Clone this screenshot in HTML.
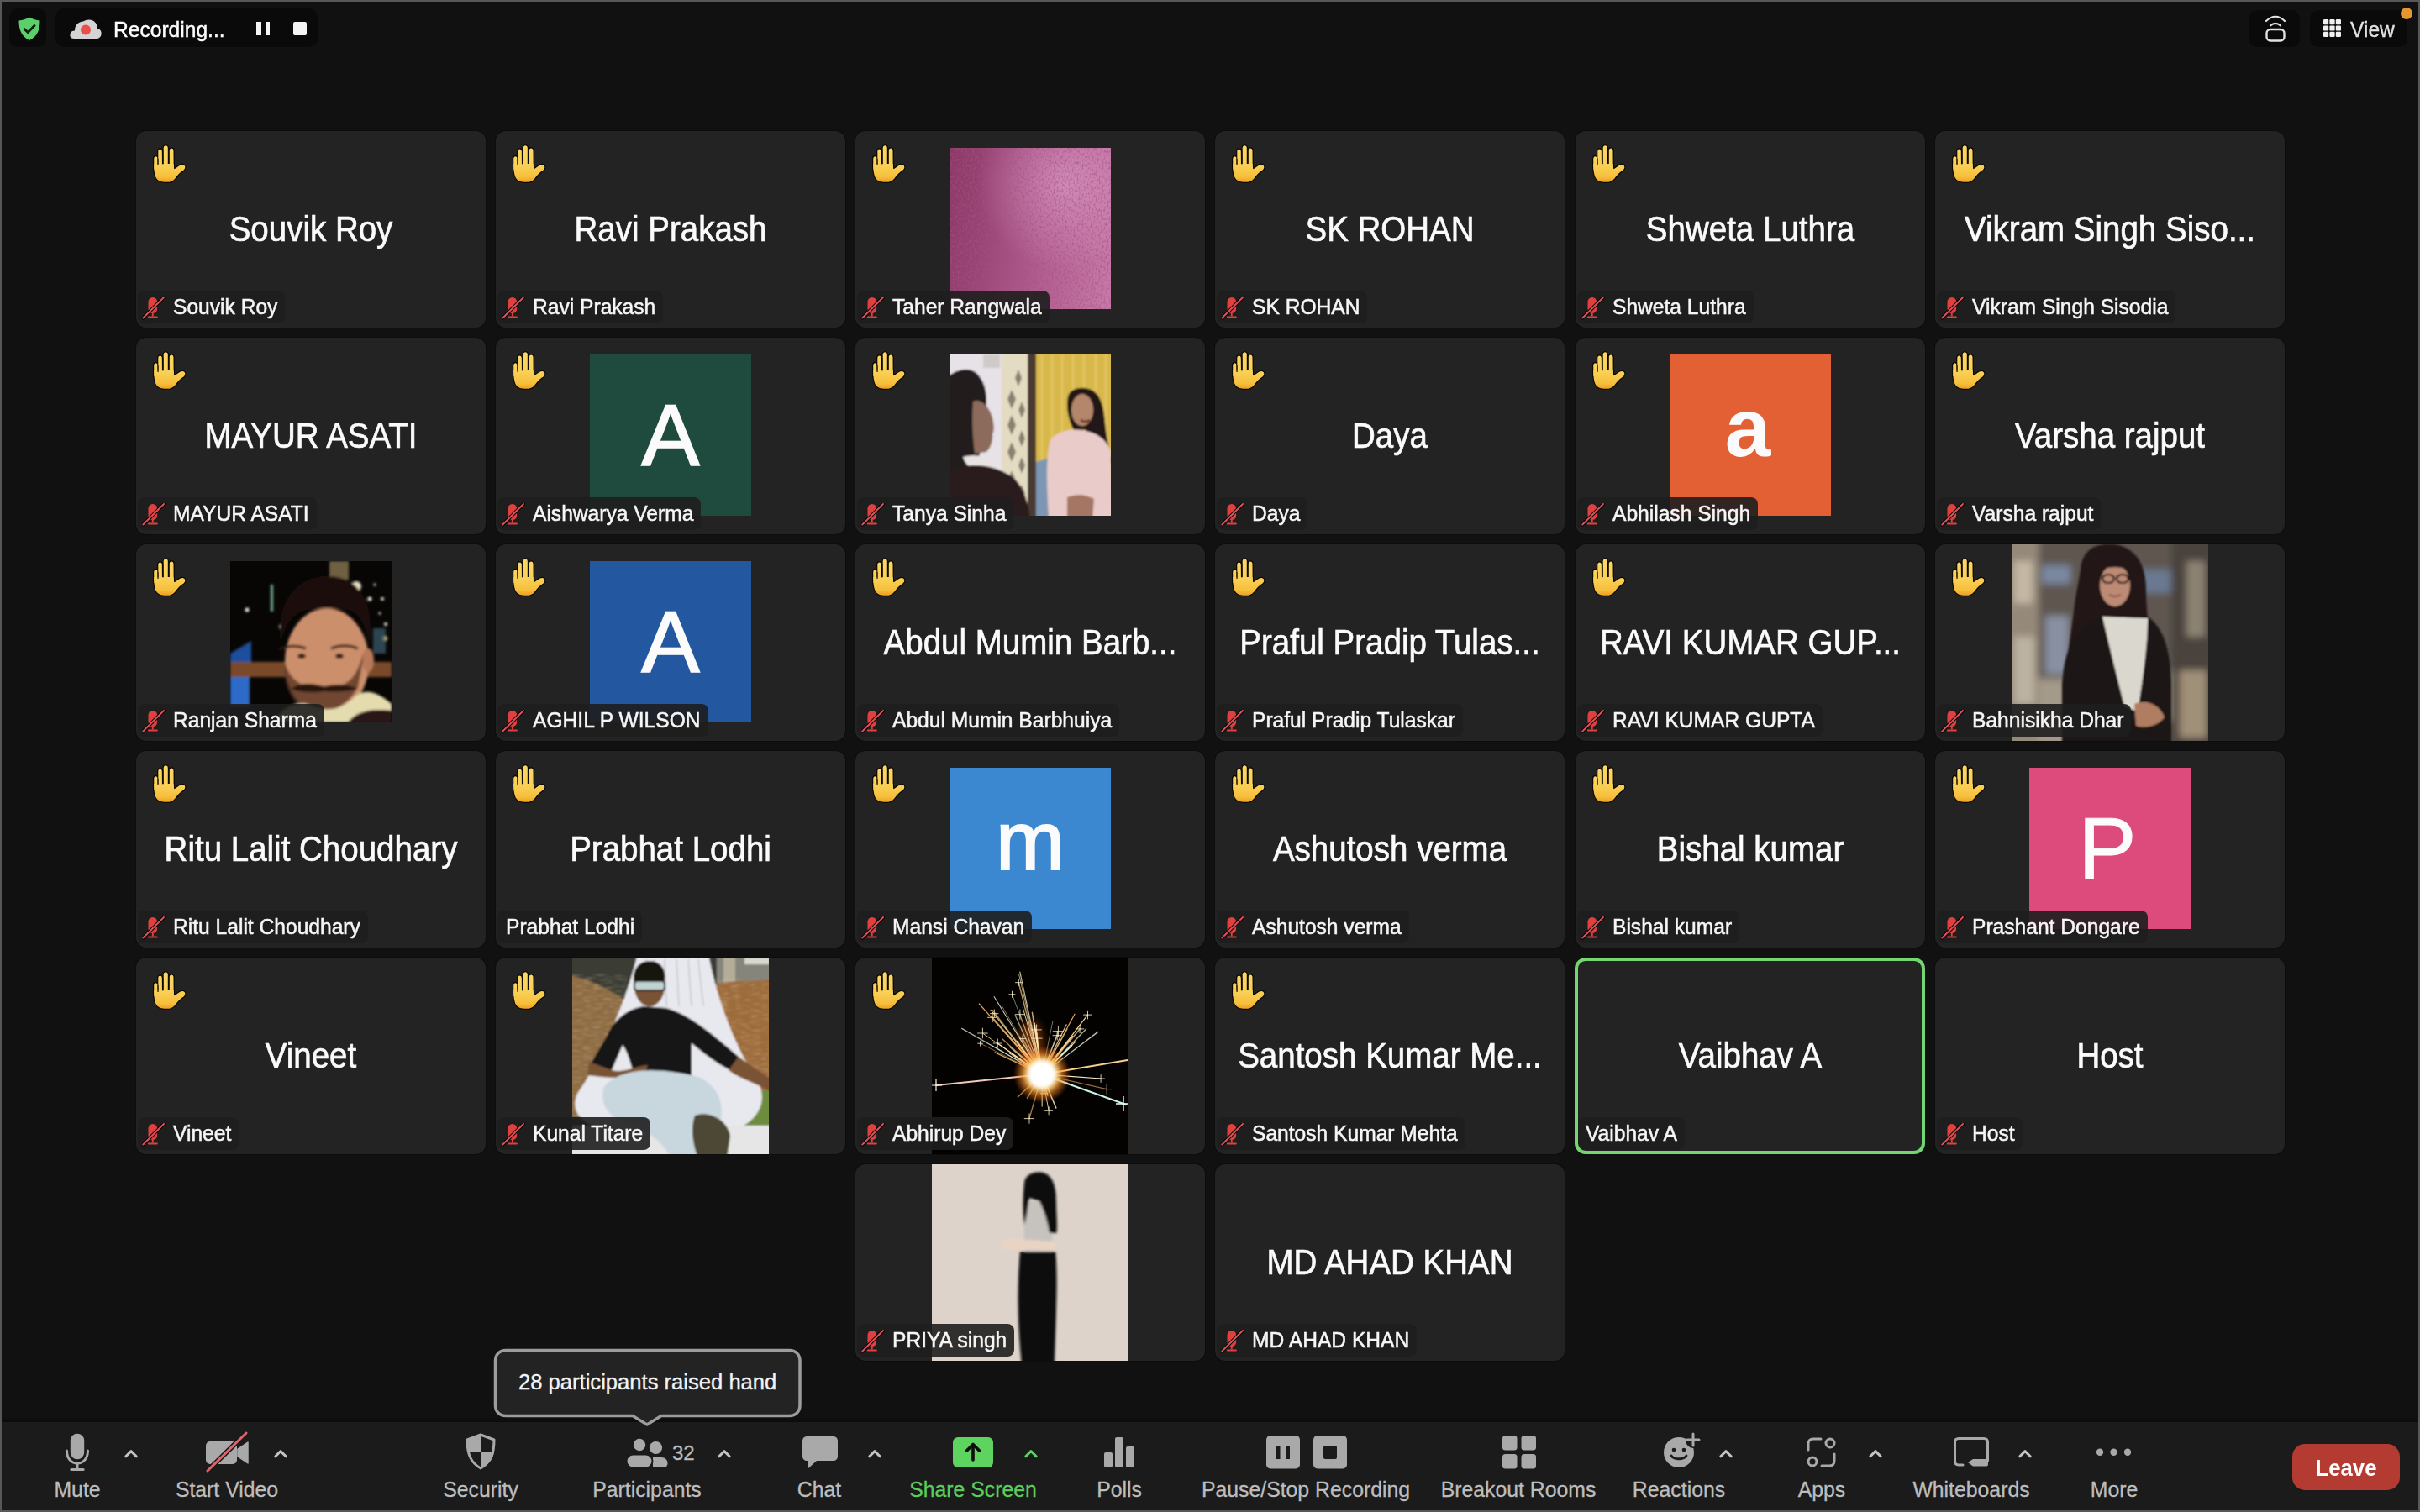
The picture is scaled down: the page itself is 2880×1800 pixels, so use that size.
<!DOCTYPE html><html><head><meta charset="utf-8"><style>
*{margin:0;padding:0;box-sizing:border-box}
html,body{width:2880px;height:1800px;overflow:hidden;background:#111111;font-family:"Liberation Sans",sans-serif}
#win{position:absolute;left:0;top:0;width:2880px;height:1800px;border:2px solid #585858;background:#111111}
.tile{position:absolute;width:416px;height:234px;background:#232323;border-radius:12px;overflow:hidden;color:#fff;box-shadow:0 0 0 1px #0d0d0d}
.tile.active{box-shadow:0 0 0 0 transparent}
.activebd{position:absolute;border:4px solid #72d672;border-radius:13px}
.big{position:absolute;left:0;top:94px;width:416px;text-align:center;font-size:38.5px;line-height:46px;color:#fbfbfb;white-space:nowrap;transform:scaleY(1.1);-webkit-text-stroke:0.6px #fbfbfb}
.hand{position:absolute;left:16px;top:12px}
.lbl{position:absolute;left:2px;top:190px;height:38.5px;padding-right:9px;background:rgba(30,30,30,0.9);border-radius:8px;font-size:24.6px;line-height:38.5px;color:#f6f6f6;white-space:nowrap;-webkit-text-stroke:0.5px #f6f6f6}
.lt{display:inline-block;transform:translateY(0px) scaleY(1.065)}
.mm{position:absolute}
.av{position:absolute;left:112px;top:20px;width:192px;height:192px;overflow:hidden}
.avl{position:absolute;width:192px;height:192px;text-align:center;line-height:192px;font-family:"Liberation Sans",sans-serif}
.ph{position:absolute;top:0;height:234px;overflow:hidden}
.tb{position:absolute;left:2px;top:1693px;width:2876px;height:105px;background:#1b1b1b;box-shadow:0 -4px 4px rgba(0,0,0,0.25)}
.tl{position:absolute;top:1759px;font-size:24.8px;line-height:30px;color:#bdbdbd;white-space:nowrap;transform:translateX(-50%) scaleY(1.06);-webkit-text-stroke:0.3px currentColor}
.ic{position:absolute}
</style></head><body><div id="win"></div>
<div style="position:absolute;left:11px;top:10px;width:44px;height:46px;background:#0a0a0a;border-radius:10px"></div>
<svg class="ic" style="left:19px;top:18px" width="32" height="32" viewBox="0 0 32 32"><path d="M16 2.5 C20 5 24 6 28.5 6.5 C28.5 17 26 25 16 30 C6 25 3.5 17 3.5 6.5 C8 6 12 5 16 2.5Z" fill="#5bd06a"/><path d="M10 16.5 L14.2 20.5 L22 12.5" stroke="#10200f" stroke-width="3" fill="none" stroke-linecap="round" stroke-linejoin="round"/></svg>
<div style="position:absolute;left:66px;top:10px;width:312px;height:46px;background:#0a0a0a;border-radius:10px"></div>
<svg class="ic" style="left:80px;top:18px" width="44" height="32" viewBox="0 0 44 32"><path d="M8 28 C4 28 3 25 3.5 22.5 C4 20 6 18.5 9 18.5 C9 12 13 8 19 7.5 C24 4 31 5 34 9.5 C35.5 12 36 14 36 16 C39.5 16.5 41 19.5 40.5 23 C40 26.5 37.5 28 35 28 Z" fill="#d4d4d4"/><circle cx="22" cy="17.5" r="6" fill="#e8504a"/></svg>
<div style="position:absolute;left:135px;top:19px;transform:scaleY(1.06);font-size:24.6px;line-height:34px;color:#ffffff;white-space:nowrap;-webkit-text-stroke:0.4px #fff">Recording...</div>
<div style="position:absolute;left:305px;top:26px;width:5.5px;height:16px;background:#f4f4f4"></div><div style="position:absolute;left:315.5px;top:26px;width:5.5px;height:16px;background:#f4f4f4"></div>
<div style="position:absolute;left:349px;top:26px;width:16px;height:16px;background:#f4f4f4;border-radius:2px"></div>
<div style="position:absolute;left:2676px;top:12px;width:61px;height:44px;background:#0a0a0a;border-radius:10px"></div>
<svg class="ic" style="left:2692px;top:16px" width="32" height="36" viewBox="0 0 32 36"><path d="M5 9 C12 2 20 2 27 9" stroke="#e2e2e2" stroke-width="2.2" fill="none" stroke-linecap="round"/><path d="M10 14.5 C14 11 18 11 22 14.5" stroke="#e2e2e2" stroke-width="2.2" fill="none" stroke-linecap="round"/><rect x="5.5" y="19" width="21" height="13.5" rx="4.5" stroke="#e2e2e2" stroke-width="2.4" fill="none"/></svg>
<div style="position:absolute;left:2749px;top:12px;width:116px;height:44px;background:#0a0a0a;border-radius:10px"></div>
<svg class="ic" style="left:2764px;top:22px" width="24" height="24" viewBox="0 0 24 24"><rect x="1.0" y="1.0" width="6.2" height="6.2" rx="1.2" fill="#f0f0f0"/><rect x="8.4" y="1.0" width="6.2" height="6.2" rx="1.2" fill="#f0f0f0"/><rect x="15.8" y="1.0" width="6.2" height="6.2" rx="1.2" fill="#f0f0f0"/><rect x="1.0" y="8.4" width="6.2" height="6.2" rx="1.2" fill="#f0f0f0"/><rect x="8.4" y="8.4" width="6.2" height="6.2" rx="1.2" fill="#f0f0f0"/><rect x="15.8" y="8.4" width="6.2" height="6.2" rx="1.2" fill="#f0f0f0"/><rect x="1.0" y="15.8" width="6.2" height="6.2" rx="1.2" fill="#f0f0f0"/><rect x="8.4" y="15.8" width="6.2" height="6.2" rx="1.2" fill="#f0f0f0"/><rect x="15.8" y="15.8" width="6.2" height="6.2" rx="1.2" fill="#f0f0f0"/></svg>
<div style="position:absolute;left:2797px;top:19px;transform:scaleY(1.04);font-size:24.6px;line-height:34px;color:#e2e2e2;white-space:nowrap;-webkit-text-stroke:0.3px #e2e2e2">View</div>
<div style="position:absolute;left:2857px;top:9px;width:14px;height:14px;background:#e6962e;border-radius:50%"></div>
<div class="tile" style="left:162px;top:156px"><div class="big">Souvik Roy</div><svg class="hand" width="50" height="54" viewBox="0 0 50 54"><defs><linearGradient id="hg" gradientUnits="userSpaceOnUse" x1="0" y1="5" x2="0" y2="49"><stop offset="0" stop-color="#fbd866"/><stop offset="0.55" stop-color="#f9d055"/><stop offset="0.85" stop-color="#f6bf3c"/><stop offset="1" stop-color="#ee9f22"/></linearGradient></defs><g stroke="#0d0803" stroke-width="2.4" stroke-linejoin="round" fill="#0d0803"><path d="M5.2 21.5 C5.2 17.2 9.6 17.2 9.6 21.5 L9.8 34 L5.4 34Z"/><path d="M10.3 12.2 C10.3 8.6 14.8 8.6 14.8 12.2 L15 31 L10.4 31Z"/><path d="M16.7 8.2 C16.7 4.4 21.8 4.4 21.8 8.2 L21.8 30 L16.7 30Z"/><path d="M23.7 11.2 C23.7 7.6 28.5 7.6 28.5 11.2 L28.7 33 L23.7 33Z"/><path d="M5.3 30 C5.5 38 6.6 42.5 9.1 45.4 C12 48.4 16.5 48.8 20.5 48.8 C25 48.8 28 47.4 30.4 44.4 C32.4 41.9 34.2 39.5 36.5 37.5 C38.8 35.5 42.5 34.2 42.3 30.8 C42 27.8 38.8 27.4 36.3 28.8 C33.6 30.3 31.5 32.6 29.2 33.2 L28.6 27 L5.3 27Z"/></g><g fill="url(#hg)"><path d="M5.2 21.5 C5.2 17.2 9.6 17.2 9.6 21.5 L9.8 34 L5.4 34Z"/><path d="M10.3 12.2 C10.3 8.6 14.8 8.6 14.8 12.2 L15 31 L10.4 31Z"/><path d="M16.7 8.2 C16.7 4.4 21.8 4.4 21.8 8.2 L21.8 30 L16.7 30Z"/><path d="M23.7 11.2 C23.7 7.6 28.5 7.6 28.5 11.2 L28.7 33 L23.7 33Z"/><path d="M5.3 30 C5.5 38 6.6 42.5 9.1 45.4 C12 48.4 16.5 48.8 20.5 48.8 C25 48.8 28 47.4 30.4 44.4 C32.4 41.9 34.2 39.5 36.5 37.5 C38.8 35.5 42.5 34.2 42.3 30.8 C42 27.8 38.8 27.4 36.3 28.8 C33.6 30.3 31.5 32.6 29.2 33.2 L28.6 27 L5.3 27Z"/></g><g stroke="#120a02" stroke-width="1.2" stroke-linecap="round" fill="none"><path d="M9.95 21 L10.05 28.5"/><path d="M15.75 12 L15.85 27"/><path d="M22.75 9.5 L22.75 26.5"/></g></svg><div class="lbl" style="padding-left:42px"><svg class="mm" style="left:5px;top:7px" width="28" height="28" viewBox="0 0 28 28"><rect x="7.5" y="1" width="10.6" height="19" rx="5.3" fill="#e0413f"/><path d="M12.8 20 L12.8 23.5" stroke="#e0413f" stroke-width="1.8"/><path d="M8 24.5 L17.8 24.5" stroke="#e0413f" stroke-width="2.2" stroke-linecap="round"/><path d="M1.3 25.5 L26 1" stroke="#0b0202" stroke-width="4" stroke-linecap="round"/><path d="M1.3 25.5 L26 1" stroke="#e2505e" stroke-width="1.9" stroke-linecap="round"/></svg><span class="lt">Souvik Roy</span></div></div>
<div class="tile" style="left:590px;top:156px"><div class="big">Ravi Prakash</div><svg class="hand" width="50" height="54" viewBox="0 0 50 54"><defs><linearGradient id="hg" gradientUnits="userSpaceOnUse" x1="0" y1="5" x2="0" y2="49"><stop offset="0" stop-color="#fbd866"/><stop offset="0.55" stop-color="#f9d055"/><stop offset="0.85" stop-color="#f6bf3c"/><stop offset="1" stop-color="#ee9f22"/></linearGradient></defs><g stroke="#0d0803" stroke-width="2.4" stroke-linejoin="round" fill="#0d0803"><path d="M5.2 21.5 C5.2 17.2 9.6 17.2 9.6 21.5 L9.8 34 L5.4 34Z"/><path d="M10.3 12.2 C10.3 8.6 14.8 8.6 14.8 12.2 L15 31 L10.4 31Z"/><path d="M16.7 8.2 C16.7 4.4 21.8 4.4 21.8 8.2 L21.8 30 L16.7 30Z"/><path d="M23.7 11.2 C23.7 7.6 28.5 7.6 28.5 11.2 L28.7 33 L23.7 33Z"/><path d="M5.3 30 C5.5 38 6.6 42.5 9.1 45.4 C12 48.4 16.5 48.8 20.5 48.8 C25 48.8 28 47.4 30.4 44.4 C32.4 41.9 34.2 39.5 36.5 37.5 C38.8 35.5 42.5 34.2 42.3 30.8 C42 27.8 38.8 27.4 36.3 28.8 C33.6 30.3 31.5 32.6 29.2 33.2 L28.6 27 L5.3 27Z"/></g><g fill="url(#hg)"><path d="M5.2 21.5 C5.2 17.2 9.6 17.2 9.6 21.5 L9.8 34 L5.4 34Z"/><path d="M10.3 12.2 C10.3 8.6 14.8 8.6 14.8 12.2 L15 31 L10.4 31Z"/><path d="M16.7 8.2 C16.7 4.4 21.8 4.4 21.8 8.2 L21.8 30 L16.7 30Z"/><path d="M23.7 11.2 C23.7 7.6 28.5 7.6 28.5 11.2 L28.7 33 L23.7 33Z"/><path d="M5.3 30 C5.5 38 6.6 42.5 9.1 45.4 C12 48.4 16.5 48.8 20.5 48.8 C25 48.8 28 47.4 30.4 44.4 C32.4 41.9 34.2 39.5 36.5 37.5 C38.8 35.5 42.5 34.2 42.3 30.8 C42 27.8 38.8 27.4 36.3 28.8 C33.6 30.3 31.5 32.6 29.2 33.2 L28.6 27 L5.3 27Z"/></g><g stroke="#120a02" stroke-width="1.2" stroke-linecap="round" fill="none"><path d="M9.95 21 L10.05 28.5"/><path d="M15.75 12 L15.85 27"/><path d="M22.75 9.5 L22.75 26.5"/></g></svg><div class="lbl" style="padding-left:42px"><svg class="mm" style="left:5px;top:7px" width="28" height="28" viewBox="0 0 28 28"><rect x="7.5" y="1" width="10.6" height="19" rx="5.3" fill="#e0413f"/><path d="M12.8 20 L12.8 23.5" stroke="#e0413f" stroke-width="1.8"/><path d="M8 24.5 L17.8 24.5" stroke="#e0413f" stroke-width="2.2" stroke-linecap="round"/><path d="M1.3 25.5 L26 1" stroke="#0b0202" stroke-width="4" stroke-linecap="round"/><path d="M1.3 25.5 L26 1" stroke="#e2505e" stroke-width="1.9" stroke-linecap="round"/></svg><span class="lt">Ravi Prakash</span></div></div>
<div class="tile" style="left:1018px;top:156px"><div class="av" style="background:linear-gradient(100deg,#8a3864 0%,#9c4878 30%,#b25e90 60%,#c87ca8 100%)"><svg width="192" height="192" viewBox="0 0 192 192" style="position:absolute;left:0;top:0"><defs><radialGradient id="tg" cx="0.72" cy="0.22" r="0.55"><stop offset="0" stop-color="#dc9cc6" stop-opacity="0.7"/><stop offset="1" stop-color="#dc9cc6" stop-opacity="0"/></radialGradient><filter id="tn" x="0" y="0" width="100%" height="100%"><feTurbulence type="fractalNoise" baseFrequency="0.5 0.3" numOctaves="2" seed="3" result="n"/><feColorMatrix in="n" type="matrix" values="0 0 0 0 0.38  0 0 0 0 0.08  0 0 0 0 0.24  0 0 0 1.8 -0.8"/></filter></defs><rect width="192" height="192" fill="url(#tg)"/><rect width="192" height="192" filter="url(#tn)"/></svg></div><svg class="hand" width="50" height="54" viewBox="0 0 50 54"><defs><linearGradient id="hg" gradientUnits="userSpaceOnUse" x1="0" y1="5" x2="0" y2="49"><stop offset="0" stop-color="#fbd866"/><stop offset="0.55" stop-color="#f9d055"/><stop offset="0.85" stop-color="#f6bf3c"/><stop offset="1" stop-color="#ee9f22"/></linearGradient></defs><g stroke="#0d0803" stroke-width="2.4" stroke-linejoin="round" fill="#0d0803"><path d="M5.2 21.5 C5.2 17.2 9.6 17.2 9.6 21.5 L9.8 34 L5.4 34Z"/><path d="M10.3 12.2 C10.3 8.6 14.8 8.6 14.8 12.2 L15 31 L10.4 31Z"/><path d="M16.7 8.2 C16.7 4.4 21.8 4.4 21.8 8.2 L21.8 30 L16.7 30Z"/><path d="M23.7 11.2 C23.7 7.6 28.5 7.6 28.5 11.2 L28.7 33 L23.7 33Z"/><path d="M5.3 30 C5.5 38 6.6 42.5 9.1 45.4 C12 48.4 16.5 48.8 20.5 48.8 C25 48.8 28 47.4 30.4 44.4 C32.4 41.9 34.2 39.5 36.5 37.5 C38.8 35.5 42.5 34.2 42.3 30.8 C42 27.8 38.8 27.4 36.3 28.8 C33.6 30.3 31.5 32.6 29.2 33.2 L28.6 27 L5.3 27Z"/></g><g fill="url(#hg)"><path d="M5.2 21.5 C5.2 17.2 9.6 17.2 9.6 21.5 L9.8 34 L5.4 34Z"/><path d="M10.3 12.2 C10.3 8.6 14.8 8.6 14.8 12.2 L15 31 L10.4 31Z"/><path d="M16.7 8.2 C16.7 4.4 21.8 4.4 21.8 8.2 L21.8 30 L16.7 30Z"/><path d="M23.7 11.2 C23.7 7.6 28.5 7.6 28.5 11.2 L28.7 33 L23.7 33Z"/><path d="M5.3 30 C5.5 38 6.6 42.5 9.1 45.4 C12 48.4 16.5 48.8 20.5 48.8 C25 48.8 28 47.4 30.4 44.4 C32.4 41.9 34.2 39.5 36.5 37.5 C38.8 35.5 42.5 34.2 42.3 30.8 C42 27.8 38.8 27.4 36.3 28.8 C33.6 30.3 31.5 32.6 29.2 33.2 L28.6 27 L5.3 27Z"/></g><g stroke="#120a02" stroke-width="1.2" stroke-linecap="round" fill="none"><path d="M9.95 21 L10.05 28.5"/><path d="M15.75 12 L15.85 27"/><path d="M22.75 9.5 L22.75 26.5"/></g></svg><div class="lbl" style="padding-left:42px"><svg class="mm" style="left:5px;top:7px" width="28" height="28" viewBox="0 0 28 28"><rect x="7.5" y="1" width="10.6" height="19" rx="5.3" fill="#e0413f"/><path d="M12.8 20 L12.8 23.5" stroke="#e0413f" stroke-width="1.8"/><path d="M8 24.5 L17.8 24.5" stroke="#e0413f" stroke-width="2.2" stroke-linecap="round"/><path d="M1.3 25.5 L26 1" stroke="#0b0202" stroke-width="4" stroke-linecap="round"/><path d="M1.3 25.5 L26 1" stroke="#e2505e" stroke-width="1.9" stroke-linecap="round"/></svg><span class="lt">Taher Rangwala</span></div></div>
<div class="tile" style="left:1446px;top:156px"><div class="big">SK ROHAN</div><svg class="hand" width="50" height="54" viewBox="0 0 50 54"><defs><linearGradient id="hg" gradientUnits="userSpaceOnUse" x1="0" y1="5" x2="0" y2="49"><stop offset="0" stop-color="#fbd866"/><stop offset="0.55" stop-color="#f9d055"/><stop offset="0.85" stop-color="#f6bf3c"/><stop offset="1" stop-color="#ee9f22"/></linearGradient></defs><g stroke="#0d0803" stroke-width="2.4" stroke-linejoin="round" fill="#0d0803"><path d="M5.2 21.5 C5.2 17.2 9.6 17.2 9.6 21.5 L9.8 34 L5.4 34Z"/><path d="M10.3 12.2 C10.3 8.6 14.8 8.6 14.8 12.2 L15 31 L10.4 31Z"/><path d="M16.7 8.2 C16.7 4.4 21.8 4.4 21.8 8.2 L21.8 30 L16.7 30Z"/><path d="M23.7 11.2 C23.7 7.6 28.5 7.6 28.5 11.2 L28.7 33 L23.7 33Z"/><path d="M5.3 30 C5.5 38 6.6 42.5 9.1 45.4 C12 48.4 16.5 48.8 20.5 48.8 C25 48.8 28 47.4 30.4 44.4 C32.4 41.9 34.2 39.5 36.5 37.5 C38.8 35.5 42.5 34.2 42.3 30.8 C42 27.8 38.8 27.4 36.3 28.8 C33.6 30.3 31.5 32.6 29.2 33.2 L28.6 27 L5.3 27Z"/></g><g fill="url(#hg)"><path d="M5.2 21.5 C5.2 17.2 9.6 17.2 9.6 21.5 L9.8 34 L5.4 34Z"/><path d="M10.3 12.2 C10.3 8.6 14.8 8.6 14.8 12.2 L15 31 L10.4 31Z"/><path d="M16.7 8.2 C16.7 4.4 21.8 4.4 21.8 8.2 L21.8 30 L16.7 30Z"/><path d="M23.7 11.2 C23.7 7.6 28.5 7.6 28.5 11.2 L28.7 33 L23.7 33Z"/><path d="M5.3 30 C5.5 38 6.6 42.5 9.1 45.4 C12 48.4 16.5 48.8 20.5 48.8 C25 48.8 28 47.4 30.4 44.4 C32.4 41.9 34.2 39.5 36.5 37.5 C38.8 35.5 42.5 34.2 42.3 30.8 C42 27.8 38.8 27.4 36.3 28.8 C33.6 30.3 31.5 32.6 29.2 33.2 L28.6 27 L5.3 27Z"/></g><g stroke="#120a02" stroke-width="1.2" stroke-linecap="round" fill="none"><path d="M9.95 21 L10.05 28.5"/><path d="M15.75 12 L15.85 27"/><path d="M22.75 9.5 L22.75 26.5"/></g></svg><div class="lbl" style="padding-left:42px"><svg class="mm" style="left:5px;top:7px" width="28" height="28" viewBox="0 0 28 28"><rect x="7.5" y="1" width="10.6" height="19" rx="5.3" fill="#e0413f"/><path d="M12.8 20 L12.8 23.5" stroke="#e0413f" stroke-width="1.8"/><path d="M8 24.5 L17.8 24.5" stroke="#e0413f" stroke-width="2.2" stroke-linecap="round"/><path d="M1.3 25.5 L26 1" stroke="#0b0202" stroke-width="4" stroke-linecap="round"/><path d="M1.3 25.5 L26 1" stroke="#e2505e" stroke-width="1.9" stroke-linecap="round"/></svg><span class="lt">SK ROHAN</span></div></div>
<div class="tile" style="left:1875px;top:156px"><div class="big">Shweta Luthra</div><svg class="hand" width="50" height="54" viewBox="0 0 50 54"><defs><linearGradient id="hg" gradientUnits="userSpaceOnUse" x1="0" y1="5" x2="0" y2="49"><stop offset="0" stop-color="#fbd866"/><stop offset="0.55" stop-color="#f9d055"/><stop offset="0.85" stop-color="#f6bf3c"/><stop offset="1" stop-color="#ee9f22"/></linearGradient></defs><g stroke="#0d0803" stroke-width="2.4" stroke-linejoin="round" fill="#0d0803"><path d="M5.2 21.5 C5.2 17.2 9.6 17.2 9.6 21.5 L9.8 34 L5.4 34Z"/><path d="M10.3 12.2 C10.3 8.6 14.8 8.6 14.8 12.2 L15 31 L10.4 31Z"/><path d="M16.7 8.2 C16.7 4.4 21.8 4.4 21.8 8.2 L21.8 30 L16.7 30Z"/><path d="M23.7 11.2 C23.7 7.6 28.5 7.6 28.5 11.2 L28.7 33 L23.7 33Z"/><path d="M5.3 30 C5.5 38 6.6 42.5 9.1 45.4 C12 48.4 16.5 48.8 20.5 48.8 C25 48.8 28 47.4 30.4 44.4 C32.4 41.9 34.2 39.5 36.5 37.5 C38.8 35.5 42.5 34.2 42.3 30.8 C42 27.8 38.8 27.4 36.3 28.8 C33.6 30.3 31.5 32.6 29.2 33.2 L28.6 27 L5.3 27Z"/></g><g fill="url(#hg)"><path d="M5.2 21.5 C5.2 17.2 9.6 17.2 9.6 21.5 L9.8 34 L5.4 34Z"/><path d="M10.3 12.2 C10.3 8.6 14.8 8.6 14.8 12.2 L15 31 L10.4 31Z"/><path d="M16.7 8.2 C16.7 4.4 21.8 4.4 21.8 8.2 L21.8 30 L16.7 30Z"/><path d="M23.7 11.2 C23.7 7.6 28.5 7.6 28.5 11.2 L28.7 33 L23.7 33Z"/><path d="M5.3 30 C5.5 38 6.6 42.5 9.1 45.4 C12 48.4 16.5 48.8 20.5 48.8 C25 48.8 28 47.4 30.4 44.4 C32.4 41.9 34.2 39.5 36.5 37.5 C38.8 35.5 42.5 34.2 42.3 30.8 C42 27.8 38.8 27.4 36.3 28.8 C33.6 30.3 31.5 32.6 29.2 33.2 L28.6 27 L5.3 27Z"/></g><g stroke="#120a02" stroke-width="1.2" stroke-linecap="round" fill="none"><path d="M9.95 21 L10.05 28.5"/><path d="M15.75 12 L15.85 27"/><path d="M22.75 9.5 L22.75 26.5"/></g></svg><div class="lbl" style="padding-left:42px"><svg class="mm" style="left:5px;top:7px" width="28" height="28" viewBox="0 0 28 28"><rect x="7.5" y="1" width="10.6" height="19" rx="5.3" fill="#e0413f"/><path d="M12.8 20 L12.8 23.5" stroke="#e0413f" stroke-width="1.8"/><path d="M8 24.5 L17.8 24.5" stroke="#e0413f" stroke-width="2.2" stroke-linecap="round"/><path d="M1.3 25.5 L26 1" stroke="#0b0202" stroke-width="4" stroke-linecap="round"/><path d="M1.3 25.5 L26 1" stroke="#e2505e" stroke-width="1.9" stroke-linecap="round"/></svg><span class="lt">Shweta Luthra</span></div></div>
<div class="tile" style="left:2303px;top:156px"><div class="big">Vikram Singh Siso...</div><svg class="hand" width="50" height="54" viewBox="0 0 50 54"><defs><linearGradient id="hg" gradientUnits="userSpaceOnUse" x1="0" y1="5" x2="0" y2="49"><stop offset="0" stop-color="#fbd866"/><stop offset="0.55" stop-color="#f9d055"/><stop offset="0.85" stop-color="#f6bf3c"/><stop offset="1" stop-color="#ee9f22"/></linearGradient></defs><g stroke="#0d0803" stroke-width="2.4" stroke-linejoin="round" fill="#0d0803"><path d="M5.2 21.5 C5.2 17.2 9.6 17.2 9.6 21.5 L9.8 34 L5.4 34Z"/><path d="M10.3 12.2 C10.3 8.6 14.8 8.6 14.8 12.2 L15 31 L10.4 31Z"/><path d="M16.7 8.2 C16.7 4.4 21.8 4.4 21.8 8.2 L21.8 30 L16.7 30Z"/><path d="M23.7 11.2 C23.7 7.6 28.5 7.6 28.5 11.2 L28.7 33 L23.7 33Z"/><path d="M5.3 30 C5.5 38 6.6 42.5 9.1 45.4 C12 48.4 16.5 48.8 20.5 48.8 C25 48.8 28 47.4 30.4 44.4 C32.4 41.9 34.2 39.5 36.5 37.5 C38.8 35.5 42.5 34.2 42.3 30.8 C42 27.8 38.8 27.4 36.3 28.8 C33.6 30.3 31.5 32.6 29.2 33.2 L28.6 27 L5.3 27Z"/></g><g fill="url(#hg)"><path d="M5.2 21.5 C5.2 17.2 9.6 17.2 9.6 21.5 L9.8 34 L5.4 34Z"/><path d="M10.3 12.2 C10.3 8.6 14.8 8.6 14.8 12.2 L15 31 L10.4 31Z"/><path d="M16.7 8.2 C16.7 4.4 21.8 4.4 21.8 8.2 L21.8 30 L16.7 30Z"/><path d="M23.7 11.2 C23.7 7.6 28.5 7.6 28.5 11.2 L28.7 33 L23.7 33Z"/><path d="M5.3 30 C5.5 38 6.6 42.5 9.1 45.4 C12 48.4 16.5 48.8 20.5 48.8 C25 48.8 28 47.4 30.4 44.4 C32.4 41.9 34.2 39.5 36.5 37.5 C38.8 35.5 42.5 34.2 42.3 30.8 C42 27.8 38.8 27.4 36.3 28.8 C33.6 30.3 31.5 32.6 29.2 33.2 L28.6 27 L5.3 27Z"/></g><g stroke="#120a02" stroke-width="1.2" stroke-linecap="round" fill="none"><path d="M9.95 21 L10.05 28.5"/><path d="M15.75 12 L15.85 27"/><path d="M22.75 9.5 L22.75 26.5"/></g></svg><div class="lbl" style="padding-left:42px"><svg class="mm" style="left:5px;top:7px" width="28" height="28" viewBox="0 0 28 28"><rect x="7.5" y="1" width="10.6" height="19" rx="5.3" fill="#e0413f"/><path d="M12.8 20 L12.8 23.5" stroke="#e0413f" stroke-width="1.8"/><path d="M8 24.5 L17.8 24.5" stroke="#e0413f" stroke-width="2.2" stroke-linecap="round"/><path d="M1.3 25.5 L26 1" stroke="#0b0202" stroke-width="4" stroke-linecap="round"/><path d="M1.3 25.5 L26 1" stroke="#e2505e" stroke-width="1.9" stroke-linecap="round"/></svg><span class="lt">Vikram Singh Sisodia</span></div></div>
<div class="tile" style="left:162px;top:402px"><div class="big">MAYUR ASATI</div><svg class="hand" width="50" height="54" viewBox="0 0 50 54"><defs><linearGradient id="hg" gradientUnits="userSpaceOnUse" x1="0" y1="5" x2="0" y2="49"><stop offset="0" stop-color="#fbd866"/><stop offset="0.55" stop-color="#f9d055"/><stop offset="0.85" stop-color="#f6bf3c"/><stop offset="1" stop-color="#ee9f22"/></linearGradient></defs><g stroke="#0d0803" stroke-width="2.4" stroke-linejoin="round" fill="#0d0803"><path d="M5.2 21.5 C5.2 17.2 9.6 17.2 9.6 21.5 L9.8 34 L5.4 34Z"/><path d="M10.3 12.2 C10.3 8.6 14.8 8.6 14.8 12.2 L15 31 L10.4 31Z"/><path d="M16.7 8.2 C16.7 4.4 21.8 4.4 21.8 8.2 L21.8 30 L16.7 30Z"/><path d="M23.7 11.2 C23.7 7.6 28.5 7.6 28.5 11.2 L28.7 33 L23.7 33Z"/><path d="M5.3 30 C5.5 38 6.6 42.5 9.1 45.4 C12 48.4 16.5 48.8 20.5 48.8 C25 48.8 28 47.4 30.4 44.4 C32.4 41.9 34.2 39.5 36.5 37.5 C38.8 35.5 42.5 34.2 42.3 30.8 C42 27.8 38.8 27.4 36.3 28.8 C33.6 30.3 31.5 32.6 29.2 33.2 L28.6 27 L5.3 27Z"/></g><g fill="url(#hg)"><path d="M5.2 21.5 C5.2 17.2 9.6 17.2 9.6 21.5 L9.8 34 L5.4 34Z"/><path d="M10.3 12.2 C10.3 8.6 14.8 8.6 14.8 12.2 L15 31 L10.4 31Z"/><path d="M16.7 8.2 C16.7 4.4 21.8 4.4 21.8 8.2 L21.8 30 L16.7 30Z"/><path d="M23.7 11.2 C23.7 7.6 28.5 7.6 28.5 11.2 L28.7 33 L23.7 33Z"/><path d="M5.3 30 C5.5 38 6.6 42.5 9.1 45.4 C12 48.4 16.5 48.8 20.5 48.8 C25 48.8 28 47.4 30.4 44.4 C32.4 41.9 34.2 39.5 36.5 37.5 C38.8 35.5 42.5 34.2 42.3 30.8 C42 27.8 38.8 27.4 36.3 28.8 C33.6 30.3 31.5 32.6 29.2 33.2 L28.6 27 L5.3 27Z"/></g><g stroke="#120a02" stroke-width="1.2" stroke-linecap="round" fill="none"><path d="M9.95 21 L10.05 28.5"/><path d="M15.75 12 L15.85 27"/><path d="M22.75 9.5 L22.75 26.5"/></g></svg><div class="lbl" style="padding-left:42px"><svg class="mm" style="left:5px;top:7px" width="28" height="28" viewBox="0 0 28 28"><rect x="7.5" y="1" width="10.6" height="19" rx="5.3" fill="#e0413f"/><path d="M12.8 20 L12.8 23.5" stroke="#e0413f" stroke-width="1.8"/><path d="M8 24.5 L17.8 24.5" stroke="#e0413f" stroke-width="2.2" stroke-linecap="round"/><path d="M1.3 25.5 L26 1" stroke="#0b0202" stroke-width="4" stroke-linecap="round"/><path d="M1.3 25.5 L26 1" stroke="#e2505e" stroke-width="1.9" stroke-linecap="round"/></svg><span class="lt">MAYUR ASATI</span></div></div>
<div class="tile" style="left:590px;top:402px"><div class="av" style="background:#1f4b3e"><div class="avl" style="font-size:104px;font-weight:400;top:0px;left:0px;color:#fbfbfb;-webkit-text-stroke:1.6px #fbfbfb">A</div></div><svg class="hand" width="50" height="54" viewBox="0 0 50 54"><defs><linearGradient id="hg" gradientUnits="userSpaceOnUse" x1="0" y1="5" x2="0" y2="49"><stop offset="0" stop-color="#fbd866"/><stop offset="0.55" stop-color="#f9d055"/><stop offset="0.85" stop-color="#f6bf3c"/><stop offset="1" stop-color="#ee9f22"/></linearGradient></defs><g stroke="#0d0803" stroke-width="2.4" stroke-linejoin="round" fill="#0d0803"><path d="M5.2 21.5 C5.2 17.2 9.6 17.2 9.6 21.5 L9.8 34 L5.4 34Z"/><path d="M10.3 12.2 C10.3 8.6 14.8 8.6 14.8 12.2 L15 31 L10.4 31Z"/><path d="M16.7 8.2 C16.7 4.4 21.8 4.4 21.8 8.2 L21.8 30 L16.7 30Z"/><path d="M23.7 11.2 C23.7 7.6 28.5 7.6 28.5 11.2 L28.7 33 L23.7 33Z"/><path d="M5.3 30 C5.5 38 6.6 42.5 9.1 45.4 C12 48.4 16.5 48.8 20.5 48.8 C25 48.8 28 47.4 30.4 44.4 C32.4 41.9 34.2 39.5 36.5 37.5 C38.8 35.5 42.5 34.2 42.3 30.8 C42 27.8 38.8 27.4 36.3 28.8 C33.6 30.3 31.5 32.6 29.2 33.2 L28.6 27 L5.3 27Z"/></g><g fill="url(#hg)"><path d="M5.2 21.5 C5.2 17.2 9.6 17.2 9.6 21.5 L9.8 34 L5.4 34Z"/><path d="M10.3 12.2 C10.3 8.6 14.8 8.6 14.8 12.2 L15 31 L10.4 31Z"/><path d="M16.7 8.2 C16.7 4.4 21.8 4.4 21.8 8.2 L21.8 30 L16.7 30Z"/><path d="M23.7 11.2 C23.7 7.6 28.5 7.6 28.5 11.2 L28.7 33 L23.7 33Z"/><path d="M5.3 30 C5.5 38 6.6 42.5 9.1 45.4 C12 48.4 16.5 48.8 20.5 48.8 C25 48.8 28 47.4 30.4 44.4 C32.4 41.9 34.2 39.5 36.5 37.5 C38.8 35.5 42.5 34.2 42.3 30.8 C42 27.8 38.8 27.4 36.3 28.8 C33.6 30.3 31.5 32.6 29.2 33.2 L28.6 27 L5.3 27Z"/></g><g stroke="#120a02" stroke-width="1.2" stroke-linecap="round" fill="none"><path d="M9.95 21 L10.05 28.5"/><path d="M15.75 12 L15.85 27"/><path d="M22.75 9.5 L22.75 26.5"/></g></svg><div class="lbl" style="padding-left:42px"><svg class="mm" style="left:5px;top:7px" width="28" height="28" viewBox="0 0 28 28"><rect x="7.5" y="1" width="10.6" height="19" rx="5.3" fill="#e0413f"/><path d="M12.8 20 L12.8 23.5" stroke="#e0413f" stroke-width="1.8"/><path d="M8 24.5 L17.8 24.5" stroke="#e0413f" stroke-width="2.2" stroke-linecap="round"/><path d="M1.3 25.5 L26 1" stroke="#0b0202" stroke-width="4" stroke-linecap="round"/><path d="M1.3 25.5 L26 1" stroke="#e2505e" stroke-width="1.9" stroke-linecap="round"/></svg><span class="lt">Aishwarya Verma</span></div></div>
<div class="tile" style="left:1018px;top:402px"><div class="av" style="background:#e6e2e6"><svg width="192" height="192" viewBox="0 0 192 192" style="position:absolute;left:0;top:0"><defs><filter id="tb1" x="-10%" y="-10%" width="120%" height="120%"><feGaussianBlur stdDeviation="1.3"/></filter></defs><g filter="url(#tb1)"><rect x="-5" y="-5" width="100" height="200" fill="#e6e2e8"/><rect x="40" y="0" width="20" height="16" fill="#cfcac8"/><rect x="62" y="-5" width="33" height="200" fill="#e4dcc2"/><g fill="#7a7264" opacity="0.85"><path d="M74 42 l5 11 l-5 12 l-5 -12z"/><path d="M86 56 l4 10 l-4 10 l-4 -10z"/><path d="M74 72 l5 12 l-5 12 l-5 -12z"/><path d="M86 90 l4 10 l-4 10 l-4 -10z"/><path d="M74 104 l5 12 l-5 12 l-5 -12z"/><path d="M86 122 l4 10 l-4 10 l-4 -10z"/><path d="M74 138 l5 12 l-5 12 l-5 -12z"/><path d="M86 155 l4 10 l-4 10 l-4 -10z"/><path d="M82 18 l4 10 l-4 10 l-4 -10z"/></g><rect x="93" y="-5" width="10" height="200" fill="#4a3a30"/><rect x="103" y="-5" width="95" height="200" fill="#d9b84c"/><g stroke="#ecd27a" stroke-width="2.5" opacity="0.55"><path d="M110 0v135"/><path d="M122 0v135"/><path d="M134 0v135"/><path d="M147 0v135"/><path d="M160 0v135"/><path d="M174 0v135"/><path d="M186 0v135"/></g><path d="M103 128 L128 120 L128 195 L103 195 Z" fill="#7d96b4"/><path d="M-5 30 C5 18 22 14 32 22 C40 30 44 40 44 56 C44 80 40 100 36 118 C30 150 20 170 10 195 L-5 195Z" fill="#221c1e"/><path d="M28 56 C36 52 46 60 50 72 C54 84 53 92 51 95 C52 100 50 110 44 116 L30 118 C28 100 26 80 28 56Z" fill="#8c6a5c"/><path d="M16 122 C30 118 50 120 62 132 L40 140 C30 138 20 135 16 122Z" fill="#e8e2e2"/><path d="M0 140 C20 128 50 130 72 144 C85 152 93 170 96 195 L-5 195Z" fill="#2a1e1e"/><path d="M141 50 C143 40 160 36 172 44 C182 52 184 66 186 90 C188 108 192 120 194 128 L168 128 C168 110 166 96 162 90 L148 90 C142 80 138 62 141 50Z" fill="#201816"/><ellipse cx="158" cy="66" rx="13" ry="19" fill="#b4866c"/><path d="M156 78 q6 4 11 0" stroke="#6a2a20" stroke-width="2.5" fill="none"/><path d="M120 102 C128 92 142 88 156 90 C174 92 186 100 192 115 L194 195 L118 195 C116 160 114 125 120 102Z" fill="#e9cbc9"/><path d="M140 170 C150 166 162 166 172 172 L170 195 L140 195Z" fill="#93604a" opacity="0.8"/></g></svg></div><svg class="hand" width="50" height="54" viewBox="0 0 50 54"><defs><linearGradient id="hg" gradientUnits="userSpaceOnUse" x1="0" y1="5" x2="0" y2="49"><stop offset="0" stop-color="#fbd866"/><stop offset="0.55" stop-color="#f9d055"/><stop offset="0.85" stop-color="#f6bf3c"/><stop offset="1" stop-color="#ee9f22"/></linearGradient></defs><g stroke="#0d0803" stroke-width="2.4" stroke-linejoin="round" fill="#0d0803"><path d="M5.2 21.5 C5.2 17.2 9.6 17.2 9.6 21.5 L9.8 34 L5.4 34Z"/><path d="M10.3 12.2 C10.3 8.6 14.8 8.6 14.8 12.2 L15 31 L10.4 31Z"/><path d="M16.7 8.2 C16.7 4.4 21.8 4.4 21.8 8.2 L21.8 30 L16.7 30Z"/><path d="M23.7 11.2 C23.7 7.6 28.5 7.6 28.5 11.2 L28.7 33 L23.7 33Z"/><path d="M5.3 30 C5.5 38 6.6 42.5 9.1 45.4 C12 48.4 16.5 48.8 20.5 48.8 C25 48.8 28 47.4 30.4 44.4 C32.4 41.9 34.2 39.5 36.5 37.5 C38.8 35.5 42.5 34.2 42.3 30.8 C42 27.8 38.8 27.4 36.3 28.8 C33.6 30.3 31.5 32.6 29.2 33.2 L28.6 27 L5.3 27Z"/></g><g fill="url(#hg)"><path d="M5.2 21.5 C5.2 17.2 9.6 17.2 9.6 21.5 L9.8 34 L5.4 34Z"/><path d="M10.3 12.2 C10.3 8.6 14.8 8.6 14.8 12.2 L15 31 L10.4 31Z"/><path d="M16.7 8.2 C16.7 4.4 21.8 4.4 21.8 8.2 L21.8 30 L16.7 30Z"/><path d="M23.7 11.2 C23.7 7.6 28.5 7.6 28.5 11.2 L28.7 33 L23.7 33Z"/><path d="M5.3 30 C5.5 38 6.6 42.5 9.1 45.4 C12 48.4 16.5 48.8 20.5 48.8 C25 48.8 28 47.4 30.4 44.4 C32.4 41.9 34.2 39.5 36.5 37.5 C38.8 35.5 42.5 34.2 42.3 30.8 C42 27.8 38.8 27.4 36.3 28.8 C33.6 30.3 31.5 32.6 29.2 33.2 L28.6 27 L5.3 27Z"/></g><g stroke="#120a02" stroke-width="1.2" stroke-linecap="round" fill="none"><path d="M9.95 21 L10.05 28.5"/><path d="M15.75 12 L15.85 27"/><path d="M22.75 9.5 L22.75 26.5"/></g></svg><div class="lbl" style="padding-left:42px"><svg class="mm" style="left:5px;top:7px" width="28" height="28" viewBox="0 0 28 28"><rect x="7.5" y="1" width="10.6" height="19" rx="5.3" fill="#e0413f"/><path d="M12.8 20 L12.8 23.5" stroke="#e0413f" stroke-width="1.8"/><path d="M8 24.5 L17.8 24.5" stroke="#e0413f" stroke-width="2.2" stroke-linecap="round"/><path d="M1.3 25.5 L26 1" stroke="#0b0202" stroke-width="4" stroke-linecap="round"/><path d="M1.3 25.5 L26 1" stroke="#e2505e" stroke-width="1.9" stroke-linecap="round"/></svg><span class="lt">Tanya Sinha</span></div></div>
<div class="tile" style="left:1446px;top:402px"><div class="big">Daya</div><svg class="hand" width="50" height="54" viewBox="0 0 50 54"><defs><linearGradient id="hg" gradientUnits="userSpaceOnUse" x1="0" y1="5" x2="0" y2="49"><stop offset="0" stop-color="#fbd866"/><stop offset="0.55" stop-color="#f9d055"/><stop offset="0.85" stop-color="#f6bf3c"/><stop offset="1" stop-color="#ee9f22"/></linearGradient></defs><g stroke="#0d0803" stroke-width="2.4" stroke-linejoin="round" fill="#0d0803"><path d="M5.2 21.5 C5.2 17.2 9.6 17.2 9.6 21.5 L9.8 34 L5.4 34Z"/><path d="M10.3 12.2 C10.3 8.6 14.8 8.6 14.8 12.2 L15 31 L10.4 31Z"/><path d="M16.7 8.2 C16.7 4.4 21.8 4.4 21.8 8.2 L21.8 30 L16.7 30Z"/><path d="M23.7 11.2 C23.7 7.6 28.5 7.6 28.5 11.2 L28.7 33 L23.7 33Z"/><path d="M5.3 30 C5.5 38 6.6 42.5 9.1 45.4 C12 48.4 16.5 48.8 20.5 48.8 C25 48.8 28 47.4 30.4 44.4 C32.4 41.9 34.2 39.5 36.5 37.5 C38.8 35.5 42.5 34.2 42.3 30.8 C42 27.8 38.8 27.4 36.3 28.8 C33.6 30.3 31.5 32.6 29.2 33.2 L28.6 27 L5.3 27Z"/></g><g fill="url(#hg)"><path d="M5.2 21.5 C5.2 17.2 9.6 17.2 9.6 21.5 L9.8 34 L5.4 34Z"/><path d="M10.3 12.2 C10.3 8.6 14.8 8.6 14.8 12.2 L15 31 L10.4 31Z"/><path d="M16.7 8.2 C16.7 4.4 21.8 4.4 21.8 8.2 L21.8 30 L16.7 30Z"/><path d="M23.7 11.2 C23.7 7.6 28.5 7.6 28.5 11.2 L28.7 33 L23.7 33Z"/><path d="M5.3 30 C5.5 38 6.6 42.5 9.1 45.4 C12 48.4 16.5 48.8 20.5 48.8 C25 48.8 28 47.4 30.4 44.4 C32.4 41.9 34.2 39.5 36.5 37.5 C38.8 35.5 42.5 34.2 42.3 30.8 C42 27.8 38.8 27.4 36.3 28.8 C33.6 30.3 31.5 32.6 29.2 33.2 L28.6 27 L5.3 27Z"/></g><g stroke="#120a02" stroke-width="1.2" stroke-linecap="round" fill="none"><path d="M9.95 21 L10.05 28.5"/><path d="M15.75 12 L15.85 27"/><path d="M22.75 9.5 L22.75 26.5"/></g></svg><div class="lbl" style="padding-left:42px"><svg class="mm" style="left:5px;top:7px" width="28" height="28" viewBox="0 0 28 28"><rect x="7.5" y="1" width="10.6" height="19" rx="5.3" fill="#e0413f"/><path d="M12.8 20 L12.8 23.5" stroke="#e0413f" stroke-width="1.8"/><path d="M8 24.5 L17.8 24.5" stroke="#e0413f" stroke-width="2.2" stroke-linecap="round"/><path d="M1.3 25.5 L26 1" stroke="#0b0202" stroke-width="4" stroke-linecap="round"/><path d="M1.3 25.5 L26 1" stroke="#e2505e" stroke-width="1.9" stroke-linecap="round"/></svg><span class="lt">Daya</span></div></div>
<div class="tile" style="left:1875px;top:402px"><div class="av" style="background:#e35f34"><div class="avl" style="font-size:98px;font-weight:700;top:-9px;left:-3px;color:#fbfbfb;-webkit-text-stroke:0px #fbfbfb">a</div></div><svg class="hand" width="50" height="54" viewBox="0 0 50 54"><defs><linearGradient id="hg" gradientUnits="userSpaceOnUse" x1="0" y1="5" x2="0" y2="49"><stop offset="0" stop-color="#fbd866"/><stop offset="0.55" stop-color="#f9d055"/><stop offset="0.85" stop-color="#f6bf3c"/><stop offset="1" stop-color="#ee9f22"/></linearGradient></defs><g stroke="#0d0803" stroke-width="2.4" stroke-linejoin="round" fill="#0d0803"><path d="M5.2 21.5 C5.2 17.2 9.6 17.2 9.6 21.5 L9.8 34 L5.4 34Z"/><path d="M10.3 12.2 C10.3 8.6 14.8 8.6 14.8 12.2 L15 31 L10.4 31Z"/><path d="M16.7 8.2 C16.7 4.4 21.8 4.4 21.8 8.2 L21.8 30 L16.7 30Z"/><path d="M23.7 11.2 C23.7 7.6 28.5 7.6 28.5 11.2 L28.7 33 L23.7 33Z"/><path d="M5.3 30 C5.5 38 6.6 42.5 9.1 45.4 C12 48.4 16.5 48.8 20.5 48.8 C25 48.8 28 47.4 30.4 44.4 C32.4 41.9 34.2 39.5 36.5 37.5 C38.8 35.5 42.5 34.2 42.3 30.8 C42 27.8 38.8 27.4 36.3 28.8 C33.6 30.3 31.5 32.6 29.2 33.2 L28.6 27 L5.3 27Z"/></g><g fill="url(#hg)"><path d="M5.2 21.5 C5.2 17.2 9.6 17.2 9.6 21.5 L9.8 34 L5.4 34Z"/><path d="M10.3 12.2 C10.3 8.6 14.8 8.6 14.8 12.2 L15 31 L10.4 31Z"/><path d="M16.7 8.2 C16.7 4.4 21.8 4.4 21.8 8.2 L21.8 30 L16.7 30Z"/><path d="M23.7 11.2 C23.7 7.6 28.5 7.6 28.5 11.2 L28.7 33 L23.7 33Z"/><path d="M5.3 30 C5.5 38 6.6 42.5 9.1 45.4 C12 48.4 16.5 48.8 20.5 48.8 C25 48.8 28 47.4 30.4 44.4 C32.4 41.9 34.2 39.5 36.5 37.5 C38.8 35.5 42.5 34.2 42.3 30.8 C42 27.8 38.8 27.4 36.3 28.8 C33.6 30.3 31.5 32.6 29.2 33.2 L28.6 27 L5.3 27Z"/></g><g stroke="#120a02" stroke-width="1.2" stroke-linecap="round" fill="none"><path d="M9.95 21 L10.05 28.5"/><path d="M15.75 12 L15.85 27"/><path d="M22.75 9.5 L22.75 26.5"/></g></svg><div class="lbl" style="padding-left:42px"><svg class="mm" style="left:5px;top:7px" width="28" height="28" viewBox="0 0 28 28"><rect x="7.5" y="1" width="10.6" height="19" rx="5.3" fill="#e0413f"/><path d="M12.8 20 L12.8 23.5" stroke="#e0413f" stroke-width="1.8"/><path d="M8 24.5 L17.8 24.5" stroke="#e0413f" stroke-width="2.2" stroke-linecap="round"/><path d="M1.3 25.5 L26 1" stroke="#0b0202" stroke-width="4" stroke-linecap="round"/><path d="M1.3 25.5 L26 1" stroke="#e2505e" stroke-width="1.9" stroke-linecap="round"/></svg><span class="lt">Abhilash Singh</span></div></div>
<div class="tile" style="left:2303px;top:402px"><div class="big">Varsha rajput</div><svg class="hand" width="50" height="54" viewBox="0 0 50 54"><defs><linearGradient id="hg" gradientUnits="userSpaceOnUse" x1="0" y1="5" x2="0" y2="49"><stop offset="0" stop-color="#fbd866"/><stop offset="0.55" stop-color="#f9d055"/><stop offset="0.85" stop-color="#f6bf3c"/><stop offset="1" stop-color="#ee9f22"/></linearGradient></defs><g stroke="#0d0803" stroke-width="2.4" stroke-linejoin="round" fill="#0d0803"><path d="M5.2 21.5 C5.2 17.2 9.6 17.2 9.6 21.5 L9.8 34 L5.4 34Z"/><path d="M10.3 12.2 C10.3 8.6 14.8 8.6 14.8 12.2 L15 31 L10.4 31Z"/><path d="M16.7 8.2 C16.7 4.4 21.8 4.4 21.8 8.2 L21.8 30 L16.7 30Z"/><path d="M23.7 11.2 C23.7 7.6 28.5 7.6 28.5 11.2 L28.7 33 L23.7 33Z"/><path d="M5.3 30 C5.5 38 6.6 42.5 9.1 45.4 C12 48.4 16.5 48.8 20.5 48.8 C25 48.8 28 47.4 30.4 44.4 C32.4 41.9 34.2 39.5 36.5 37.5 C38.8 35.5 42.5 34.2 42.3 30.8 C42 27.8 38.8 27.4 36.3 28.8 C33.6 30.3 31.5 32.6 29.2 33.2 L28.6 27 L5.3 27Z"/></g><g fill="url(#hg)"><path d="M5.2 21.5 C5.2 17.2 9.6 17.2 9.6 21.5 L9.8 34 L5.4 34Z"/><path d="M10.3 12.2 C10.3 8.6 14.8 8.6 14.8 12.2 L15 31 L10.4 31Z"/><path d="M16.7 8.2 C16.7 4.4 21.8 4.4 21.8 8.2 L21.8 30 L16.7 30Z"/><path d="M23.7 11.2 C23.7 7.6 28.5 7.6 28.5 11.2 L28.7 33 L23.7 33Z"/><path d="M5.3 30 C5.5 38 6.6 42.5 9.1 45.4 C12 48.4 16.5 48.8 20.5 48.8 C25 48.8 28 47.4 30.4 44.4 C32.4 41.9 34.2 39.5 36.5 37.5 C38.8 35.5 42.5 34.2 42.3 30.8 C42 27.8 38.8 27.4 36.3 28.8 C33.6 30.3 31.5 32.6 29.2 33.2 L28.6 27 L5.3 27Z"/></g><g stroke="#120a02" stroke-width="1.2" stroke-linecap="round" fill="none"><path d="M9.95 21 L10.05 28.5"/><path d="M15.75 12 L15.85 27"/><path d="M22.75 9.5 L22.75 26.5"/></g></svg><div class="lbl" style="padding-left:42px"><svg class="mm" style="left:5px;top:7px" width="28" height="28" viewBox="0 0 28 28"><rect x="7.5" y="1" width="10.6" height="19" rx="5.3" fill="#e0413f"/><path d="M12.8 20 L12.8 23.5" stroke="#e0413f" stroke-width="1.8"/><path d="M8 24.5 L17.8 24.5" stroke="#e0413f" stroke-width="2.2" stroke-linecap="round"/><path d="M1.3 25.5 L26 1" stroke="#0b0202" stroke-width="4" stroke-linecap="round"/><path d="M1.3 25.5 L26 1" stroke="#e2505e" stroke-width="1.9" stroke-linecap="round"/></svg><span class="lt">Varsha rajput</span></div></div>
<div class="tile" style="left:162px;top:648px"><div class="av" style="background:#070605"><svg width="192" height="192" viewBox="0 0 192 192" style="position:absolute;left:0;top:0"><defs><filter id="rb" x="-5%" y="-5%" width="110%" height="110%"><feGaussianBlur stdDeviation="1.4"/></filter></defs><g filter="url(#rb)"><rect x="118" y="0" width="23" height="22" fill="#6e6040"/><g fill="#f0f0e0"><circle cx="150" cy="30" r="6" fill="#e8e0c0"/><circle cx="172" cy="28" r="1.5"/><circle cx="181" cy="45" r="2"/><circle cx="166" cy="45" r="2.5"/><circle cx="178" cy="62" r="1.5"/><circle cx="185" cy="75" r="2"/><circle cx="20" cy="58" r="2.5"/><circle cx="60" cy="78" r="2"/><circle cx="184" cy="92" r="3" fill="#e8d080"/></g><rect x="48" y="28" width="3" height="32" fill="#6fb090"/><rect x="170" y="80" width="15" height="30" fill="#3a6070" opacity="0.7"/><path d="M0 110 L25 95 L25 138 L0 138Z" fill="#2060c0" opacity="0.8"/><rect x="0" y="120" width="192" height="18" fill="#7a4a2a"/><rect x="0" y="138" width="23" height="35" fill="#2f6ac8"/><ellipse cx="115" cy="120" rx="50" ry="64" fill="#cc8f6c"/><ellipse cx="164" cy="118" rx="7" ry="14" fill="#b87a5a"/><path d="M60 96 C54 50 78 18 116 18 C152 18 172 46 166 100 C162 80 156 66 146 60 C130 54 100 54 84 60 C72 66 64 80 60 96Z" fill="#1a110b"/><path d="M65 120 C62 140 70 170 95 180 C110 185 140 175 152 150 C156 130 158 120 158 110 C150 140 140 150 111 152 C85 152 70 140 65 120Z" fill="#5a3424" opacity="0.8"/><path d="M72 152 C85 143 100 146 112 149 C125 146 140 146 152 152 C140 156 125 156 112 155 C100 157 85 157 72 152Z" fill="#2a1610"/><path d="M58 105 C70 100 80 100 90 104" stroke="#2a1610" stroke-width="3" fill="none"/><path d="M120 104 C130 100 142 100 152 104" stroke="#2a1610" stroke-width="3" fill="none"/><ellipse cx="85" cy="113" rx="5" ry="3" fill="#2a1610"/><ellipse cx="130" cy="113" rx="5" ry="3" fill="#2a1610"/><path d="M52 192 C60 175 75 168 90 170 C110 180 130 180 150 160 C165 150 180 160 192 170 L192 192Z" fill="#e4dcae"/><path d="M140 192 C150 178 170 175 192 178 L192 192Z" fill="#2a1818"/></g></svg></div><svg class="hand" width="50" height="54" viewBox="0 0 50 54"><defs><linearGradient id="hg" gradientUnits="userSpaceOnUse" x1="0" y1="5" x2="0" y2="49"><stop offset="0" stop-color="#fbd866"/><stop offset="0.55" stop-color="#f9d055"/><stop offset="0.85" stop-color="#f6bf3c"/><stop offset="1" stop-color="#ee9f22"/></linearGradient></defs><g stroke="#0d0803" stroke-width="2.4" stroke-linejoin="round" fill="#0d0803"><path d="M5.2 21.5 C5.2 17.2 9.6 17.2 9.6 21.5 L9.8 34 L5.4 34Z"/><path d="M10.3 12.2 C10.3 8.6 14.8 8.6 14.8 12.2 L15 31 L10.4 31Z"/><path d="M16.7 8.2 C16.7 4.4 21.8 4.4 21.8 8.2 L21.8 30 L16.7 30Z"/><path d="M23.7 11.2 C23.7 7.6 28.5 7.6 28.5 11.2 L28.7 33 L23.7 33Z"/><path d="M5.3 30 C5.5 38 6.6 42.5 9.1 45.4 C12 48.4 16.5 48.8 20.5 48.8 C25 48.8 28 47.4 30.4 44.4 C32.4 41.9 34.2 39.5 36.5 37.5 C38.8 35.5 42.5 34.2 42.3 30.8 C42 27.8 38.8 27.4 36.3 28.8 C33.6 30.3 31.5 32.6 29.2 33.2 L28.6 27 L5.3 27Z"/></g><g fill="url(#hg)"><path d="M5.2 21.5 C5.2 17.2 9.6 17.2 9.6 21.5 L9.8 34 L5.4 34Z"/><path d="M10.3 12.2 C10.3 8.6 14.8 8.6 14.8 12.2 L15 31 L10.4 31Z"/><path d="M16.7 8.2 C16.7 4.4 21.8 4.4 21.8 8.2 L21.8 30 L16.7 30Z"/><path d="M23.7 11.2 C23.7 7.6 28.5 7.6 28.5 11.2 L28.7 33 L23.7 33Z"/><path d="M5.3 30 C5.5 38 6.6 42.5 9.1 45.4 C12 48.4 16.5 48.8 20.5 48.8 C25 48.8 28 47.4 30.4 44.4 C32.4 41.9 34.2 39.5 36.5 37.5 C38.8 35.5 42.5 34.2 42.3 30.8 C42 27.8 38.8 27.4 36.3 28.8 C33.6 30.3 31.5 32.6 29.2 33.2 L28.6 27 L5.3 27Z"/></g><g stroke="#120a02" stroke-width="1.2" stroke-linecap="round" fill="none"><path d="M9.95 21 L10.05 28.5"/><path d="M15.75 12 L15.85 27"/><path d="M22.75 9.5 L22.75 26.5"/></g></svg><div class="lbl" style="padding-left:42px"><svg class="mm" style="left:5px;top:7px" width="28" height="28" viewBox="0 0 28 28"><rect x="7.5" y="1" width="10.6" height="19" rx="5.3" fill="#e0413f"/><path d="M12.8 20 L12.8 23.5" stroke="#e0413f" stroke-width="1.8"/><path d="M8 24.5 L17.8 24.5" stroke="#e0413f" stroke-width="2.2" stroke-linecap="round"/><path d="M1.3 25.5 L26 1" stroke="#0b0202" stroke-width="4" stroke-linecap="round"/><path d="M1.3 25.5 L26 1" stroke="#e2505e" stroke-width="1.9" stroke-linecap="round"/></svg><span class="lt">Ranjan Sharma</span></div></div>
<div class="tile" style="left:590px;top:648px"><div class="av" style="background:#2358a1"><div class="avl" style="font-size:104px;font-weight:400;top:0px;left:0px;color:#fbfbfb;-webkit-text-stroke:1.6px #fbfbfb">A</div></div><svg class="hand" width="50" height="54" viewBox="0 0 50 54"><defs><linearGradient id="hg" gradientUnits="userSpaceOnUse" x1="0" y1="5" x2="0" y2="49"><stop offset="0" stop-color="#fbd866"/><stop offset="0.55" stop-color="#f9d055"/><stop offset="0.85" stop-color="#f6bf3c"/><stop offset="1" stop-color="#ee9f22"/></linearGradient></defs><g stroke="#0d0803" stroke-width="2.4" stroke-linejoin="round" fill="#0d0803"><path d="M5.2 21.5 C5.2 17.2 9.6 17.2 9.6 21.5 L9.8 34 L5.4 34Z"/><path d="M10.3 12.2 C10.3 8.6 14.8 8.6 14.8 12.2 L15 31 L10.4 31Z"/><path d="M16.7 8.2 C16.7 4.4 21.8 4.4 21.8 8.2 L21.8 30 L16.7 30Z"/><path d="M23.7 11.2 C23.7 7.6 28.5 7.6 28.5 11.2 L28.7 33 L23.7 33Z"/><path d="M5.3 30 C5.5 38 6.6 42.5 9.1 45.4 C12 48.4 16.5 48.8 20.5 48.8 C25 48.8 28 47.4 30.4 44.4 C32.4 41.9 34.2 39.5 36.5 37.5 C38.8 35.5 42.5 34.2 42.3 30.8 C42 27.8 38.8 27.4 36.3 28.8 C33.6 30.3 31.5 32.6 29.2 33.2 L28.6 27 L5.3 27Z"/></g><g fill="url(#hg)"><path d="M5.2 21.5 C5.2 17.2 9.6 17.2 9.6 21.5 L9.8 34 L5.4 34Z"/><path d="M10.3 12.2 C10.3 8.6 14.8 8.6 14.8 12.2 L15 31 L10.4 31Z"/><path d="M16.7 8.2 C16.7 4.4 21.8 4.4 21.8 8.2 L21.8 30 L16.7 30Z"/><path d="M23.7 11.2 C23.7 7.6 28.5 7.6 28.5 11.2 L28.7 33 L23.7 33Z"/><path d="M5.3 30 C5.5 38 6.6 42.5 9.1 45.4 C12 48.4 16.5 48.8 20.5 48.8 C25 48.8 28 47.4 30.4 44.4 C32.4 41.9 34.2 39.5 36.5 37.5 C38.8 35.5 42.5 34.2 42.3 30.8 C42 27.8 38.8 27.4 36.3 28.8 C33.6 30.3 31.5 32.6 29.2 33.2 L28.6 27 L5.3 27Z"/></g><g stroke="#120a02" stroke-width="1.2" stroke-linecap="round" fill="none"><path d="M9.95 21 L10.05 28.5"/><path d="M15.75 12 L15.85 27"/><path d="M22.75 9.5 L22.75 26.5"/></g></svg><div class="lbl" style="padding-left:42px"><svg class="mm" style="left:5px;top:7px" width="28" height="28" viewBox="0 0 28 28"><rect x="7.5" y="1" width="10.6" height="19" rx="5.3" fill="#e0413f"/><path d="M12.8 20 L12.8 23.5" stroke="#e0413f" stroke-width="1.8"/><path d="M8 24.5 L17.8 24.5" stroke="#e0413f" stroke-width="2.2" stroke-linecap="round"/><path d="M1.3 25.5 L26 1" stroke="#0b0202" stroke-width="4" stroke-linecap="round"/><path d="M1.3 25.5 L26 1" stroke="#e2505e" stroke-width="1.9" stroke-linecap="round"/></svg><span class="lt">AGHIL P WILSON</span></div></div>
<div class="tile" style="left:1018px;top:648px"><div class="big">Abdul Mumin Barb...</div><svg class="hand" width="50" height="54" viewBox="0 0 50 54"><defs><linearGradient id="hg" gradientUnits="userSpaceOnUse" x1="0" y1="5" x2="0" y2="49"><stop offset="0" stop-color="#fbd866"/><stop offset="0.55" stop-color="#f9d055"/><stop offset="0.85" stop-color="#f6bf3c"/><stop offset="1" stop-color="#ee9f22"/></linearGradient></defs><g stroke="#0d0803" stroke-width="2.4" stroke-linejoin="round" fill="#0d0803"><path d="M5.2 21.5 C5.2 17.2 9.6 17.2 9.6 21.5 L9.8 34 L5.4 34Z"/><path d="M10.3 12.2 C10.3 8.6 14.8 8.6 14.8 12.2 L15 31 L10.4 31Z"/><path d="M16.7 8.2 C16.7 4.4 21.8 4.4 21.8 8.2 L21.8 30 L16.7 30Z"/><path d="M23.7 11.2 C23.7 7.6 28.5 7.6 28.5 11.2 L28.7 33 L23.7 33Z"/><path d="M5.3 30 C5.5 38 6.6 42.5 9.1 45.4 C12 48.4 16.5 48.8 20.5 48.8 C25 48.8 28 47.4 30.4 44.4 C32.4 41.9 34.2 39.5 36.5 37.5 C38.8 35.5 42.5 34.2 42.3 30.8 C42 27.8 38.8 27.4 36.3 28.8 C33.6 30.3 31.5 32.6 29.2 33.2 L28.6 27 L5.3 27Z"/></g><g fill="url(#hg)"><path d="M5.2 21.5 C5.2 17.2 9.6 17.2 9.6 21.5 L9.8 34 L5.4 34Z"/><path d="M10.3 12.2 C10.3 8.6 14.8 8.6 14.8 12.2 L15 31 L10.4 31Z"/><path d="M16.7 8.2 C16.7 4.4 21.8 4.4 21.8 8.2 L21.8 30 L16.7 30Z"/><path d="M23.7 11.2 C23.7 7.6 28.5 7.6 28.5 11.2 L28.7 33 L23.7 33Z"/><path d="M5.3 30 C5.5 38 6.6 42.5 9.1 45.4 C12 48.4 16.5 48.8 20.5 48.8 C25 48.8 28 47.4 30.4 44.4 C32.4 41.9 34.2 39.5 36.5 37.5 C38.8 35.5 42.5 34.2 42.3 30.8 C42 27.8 38.8 27.4 36.3 28.8 C33.6 30.3 31.5 32.6 29.2 33.2 L28.6 27 L5.3 27Z"/></g><g stroke="#120a02" stroke-width="1.2" stroke-linecap="round" fill="none"><path d="M9.95 21 L10.05 28.5"/><path d="M15.75 12 L15.85 27"/><path d="M22.75 9.5 L22.75 26.5"/></g></svg><div class="lbl" style="padding-left:42px"><svg class="mm" style="left:5px;top:7px" width="28" height="28" viewBox="0 0 28 28"><rect x="7.5" y="1" width="10.6" height="19" rx="5.3" fill="#e0413f"/><path d="M12.8 20 L12.8 23.5" stroke="#e0413f" stroke-width="1.8"/><path d="M8 24.5 L17.8 24.5" stroke="#e0413f" stroke-width="2.2" stroke-linecap="round"/><path d="M1.3 25.5 L26 1" stroke="#0b0202" stroke-width="4" stroke-linecap="round"/><path d="M1.3 25.5 L26 1" stroke="#e2505e" stroke-width="1.9" stroke-linecap="round"/></svg><span class="lt">Abdul Mumin Barbhuiya</span></div></div>
<div class="tile" style="left:1446px;top:648px"><div class="big">Praful Pradip Tulas...</div><svg class="hand" width="50" height="54" viewBox="0 0 50 54"><defs><linearGradient id="hg" gradientUnits="userSpaceOnUse" x1="0" y1="5" x2="0" y2="49"><stop offset="0" stop-color="#fbd866"/><stop offset="0.55" stop-color="#f9d055"/><stop offset="0.85" stop-color="#f6bf3c"/><stop offset="1" stop-color="#ee9f22"/></linearGradient></defs><g stroke="#0d0803" stroke-width="2.4" stroke-linejoin="round" fill="#0d0803"><path d="M5.2 21.5 C5.2 17.2 9.6 17.2 9.6 21.5 L9.8 34 L5.4 34Z"/><path d="M10.3 12.2 C10.3 8.6 14.8 8.6 14.8 12.2 L15 31 L10.4 31Z"/><path d="M16.7 8.2 C16.7 4.4 21.8 4.4 21.8 8.2 L21.8 30 L16.7 30Z"/><path d="M23.7 11.2 C23.7 7.6 28.5 7.6 28.5 11.2 L28.7 33 L23.7 33Z"/><path d="M5.3 30 C5.5 38 6.6 42.5 9.1 45.4 C12 48.4 16.5 48.8 20.5 48.8 C25 48.8 28 47.4 30.4 44.4 C32.4 41.9 34.2 39.5 36.5 37.5 C38.8 35.5 42.5 34.2 42.3 30.8 C42 27.8 38.8 27.4 36.3 28.8 C33.6 30.3 31.5 32.6 29.2 33.2 L28.6 27 L5.3 27Z"/></g><g fill="url(#hg)"><path d="M5.2 21.5 C5.2 17.2 9.6 17.2 9.6 21.5 L9.8 34 L5.4 34Z"/><path d="M10.3 12.2 C10.3 8.6 14.8 8.6 14.8 12.2 L15 31 L10.4 31Z"/><path d="M16.7 8.2 C16.7 4.4 21.8 4.4 21.8 8.2 L21.8 30 L16.7 30Z"/><path d="M23.7 11.2 C23.7 7.6 28.5 7.6 28.5 11.2 L28.7 33 L23.7 33Z"/><path d="M5.3 30 C5.5 38 6.6 42.5 9.1 45.4 C12 48.4 16.5 48.8 20.5 48.8 C25 48.8 28 47.4 30.4 44.4 C32.4 41.9 34.2 39.5 36.5 37.5 C38.8 35.5 42.5 34.2 42.3 30.8 C42 27.8 38.8 27.4 36.3 28.8 C33.6 30.3 31.5 32.6 29.2 33.2 L28.6 27 L5.3 27Z"/></g><g stroke="#120a02" stroke-width="1.2" stroke-linecap="round" fill="none"><path d="M9.95 21 L10.05 28.5"/><path d="M15.75 12 L15.85 27"/><path d="M22.75 9.5 L22.75 26.5"/></g></svg><div class="lbl" style="padding-left:42px"><svg class="mm" style="left:5px;top:7px" width="28" height="28" viewBox="0 0 28 28"><rect x="7.5" y="1" width="10.6" height="19" rx="5.3" fill="#e0413f"/><path d="M12.8 20 L12.8 23.5" stroke="#e0413f" stroke-width="1.8"/><path d="M8 24.5 L17.8 24.5" stroke="#e0413f" stroke-width="2.2" stroke-linecap="round"/><path d="M1.3 25.5 L26 1" stroke="#0b0202" stroke-width="4" stroke-linecap="round"/><path d="M1.3 25.5 L26 1" stroke="#e2505e" stroke-width="1.9" stroke-linecap="round"/></svg><span class="lt">Praful Pradip Tulaskar</span></div></div>
<div class="tile" style="left:1875px;top:648px"><div class="big">RAVI KUMAR GUP...</div><svg class="hand" width="50" height="54" viewBox="0 0 50 54"><defs><linearGradient id="hg" gradientUnits="userSpaceOnUse" x1="0" y1="5" x2="0" y2="49"><stop offset="0" stop-color="#fbd866"/><stop offset="0.55" stop-color="#f9d055"/><stop offset="0.85" stop-color="#f6bf3c"/><stop offset="1" stop-color="#ee9f22"/></linearGradient></defs><g stroke="#0d0803" stroke-width="2.4" stroke-linejoin="round" fill="#0d0803"><path d="M5.2 21.5 C5.2 17.2 9.6 17.2 9.6 21.5 L9.8 34 L5.4 34Z"/><path d="M10.3 12.2 C10.3 8.6 14.8 8.6 14.8 12.2 L15 31 L10.4 31Z"/><path d="M16.7 8.2 C16.7 4.4 21.8 4.4 21.8 8.2 L21.8 30 L16.7 30Z"/><path d="M23.7 11.2 C23.7 7.6 28.5 7.6 28.5 11.2 L28.7 33 L23.7 33Z"/><path d="M5.3 30 C5.5 38 6.6 42.5 9.1 45.4 C12 48.4 16.5 48.8 20.5 48.8 C25 48.8 28 47.4 30.4 44.4 C32.4 41.9 34.2 39.5 36.5 37.5 C38.8 35.5 42.5 34.2 42.3 30.8 C42 27.8 38.8 27.4 36.3 28.8 C33.6 30.3 31.5 32.6 29.2 33.2 L28.6 27 L5.3 27Z"/></g><g fill="url(#hg)"><path d="M5.2 21.5 C5.2 17.2 9.6 17.2 9.6 21.5 L9.8 34 L5.4 34Z"/><path d="M10.3 12.2 C10.3 8.6 14.8 8.6 14.8 12.2 L15 31 L10.4 31Z"/><path d="M16.7 8.2 C16.7 4.4 21.8 4.4 21.8 8.2 L21.8 30 L16.7 30Z"/><path d="M23.7 11.2 C23.7 7.6 28.5 7.6 28.5 11.2 L28.7 33 L23.7 33Z"/><path d="M5.3 30 C5.5 38 6.6 42.5 9.1 45.4 C12 48.4 16.5 48.8 20.5 48.8 C25 48.8 28 47.4 30.4 44.4 C32.4 41.9 34.2 39.5 36.5 37.5 C38.8 35.5 42.5 34.2 42.3 30.8 C42 27.8 38.8 27.4 36.3 28.8 C33.6 30.3 31.5 32.6 29.2 33.2 L28.6 27 L5.3 27Z"/></g><g stroke="#120a02" stroke-width="1.2" stroke-linecap="round" fill="none"><path d="M9.95 21 L10.05 28.5"/><path d="M15.75 12 L15.85 27"/><path d="M22.75 9.5 L22.75 26.5"/></g></svg><div class="lbl" style="padding-left:42px"><svg class="mm" style="left:5px;top:7px" width="28" height="28" viewBox="0 0 28 28"><rect x="7.5" y="1" width="10.6" height="19" rx="5.3" fill="#e0413f"/><path d="M12.8 20 L12.8 23.5" stroke="#e0413f" stroke-width="1.8"/><path d="M8 24.5 L17.8 24.5" stroke="#e0413f" stroke-width="2.2" stroke-linecap="round"/><path d="M1.3 25.5 L26 1" stroke="#0b0202" stroke-width="4" stroke-linecap="round"/><path d="M1.3 25.5 L26 1" stroke="#e2505e" stroke-width="1.9" stroke-linecap="round"/></svg><span class="lt">RAVI KUMAR GUPTA</span></div></div>
<div class="tile" style="left:2303px;top:648px"><div class="ph" style="width:234px;left:91px;background:#6d645c"><svg width="234" height="234" viewBox="0 0 234 234" style="position:absolute;left:0;top:0"><defs><filter id="bl1" x="-10%" y="-10%" width="120%" height="120%"><feGaussianBlur stdDeviation="4"/></filter><filter id="bl1b" x="-10%" y="-10%" width="120%" height="120%"><feGaussianBlur stdDeviation="1.2"/></filter></defs><g filter="url(#bl1)"><rect x="-10" y="-10" width="44" height="260" fill="#958a7a"/><rect x="3" y="20" width="22" height="50" fill="#c4b8a4"/><rect x="3" y="110" width="24" height="80" fill="#bcb2a2"/><rect x="32" y="-10" width="160" height="260" fill="#5e5650"/><rect x="36" y="25" width="34" height="22" fill="#7a88a0"/><rect x="40" y="85" width="28" height="70" fill="#8890a2"/><rect x="150" y="30" width="42" height="28" fill="#6a7890"/><rect x="32" y="160" width="36" height="80" fill="#a49a8a"/><rect x="160" y="150" width="30" height="60" fill="#9a9484"/><rect x="190" y="-10" width="60" height="260" fill="#48423e"/><rect x="208" y="20" width="22" height="90" fill="#8c8272"/><rect x="200" y="150" width="32" height="80" fill="#a09078"/></g><g filter="url(#bl1b)"><path d="M82 30 C84 6 100 -2 122 0 C146 3 160 22 160 55 C160 90 168 120 165 150 L150 150 C150 120 146 95 142 92 L106 92 C100 100 92 120 88 150 C82 165 70 170 60 168 C66 140 70 110 74 80 C76 60 80 45 82 30Z" fill="#221816"/><ellipse cx="123" cy="49" rx="18" ry="25" fill="#bc8a74"/><path d="M106 30 C110 20 118 16 126 16 C134 16 140 22 142 32 C132 26 118 26 106 30Z" fill="#221816"/><ellipse cx="115" cy="41" rx="7" ry="5" fill="none" stroke="#1a1010" stroke-width="2.2"/><ellipse cx="132" cy="41" rx="7" ry="5" fill="none" stroke="#1a1010" stroke-width="2.2"/><path d="M116 60 q7 4 14 0" stroke="#8a4a40" stroke-width="2" fill="none"/><path d="M60 168 C62 120 80 95 108 86 L162 86 C182 100 190 130 190 170 L190 240 L60 240 Z" fill="#1b1818"/><path d="M108 86 L162 88 C162 120 156 160 150 200 L134 192 C124 152 114 112 108 86Z" fill="#dad8ce"/><path d="M146 190 C160 184 176 190 182 206 C174 216 160 220 148 216Z" fill="#b07c62"/></g></svg></div><svg class="hand" width="50" height="54" viewBox="0 0 50 54"><defs><linearGradient id="hg" gradientUnits="userSpaceOnUse" x1="0" y1="5" x2="0" y2="49"><stop offset="0" stop-color="#fbd866"/><stop offset="0.55" stop-color="#f9d055"/><stop offset="0.85" stop-color="#f6bf3c"/><stop offset="1" stop-color="#ee9f22"/></linearGradient></defs><g stroke="#0d0803" stroke-width="2.4" stroke-linejoin="round" fill="#0d0803"><path d="M5.2 21.5 C5.2 17.2 9.6 17.2 9.6 21.5 L9.8 34 L5.4 34Z"/><path d="M10.3 12.2 C10.3 8.6 14.8 8.6 14.8 12.2 L15 31 L10.4 31Z"/><path d="M16.7 8.2 C16.7 4.4 21.8 4.4 21.8 8.2 L21.8 30 L16.7 30Z"/><path d="M23.7 11.2 C23.7 7.6 28.5 7.6 28.5 11.2 L28.7 33 L23.7 33Z"/><path d="M5.3 30 C5.5 38 6.6 42.5 9.1 45.4 C12 48.4 16.5 48.8 20.5 48.8 C25 48.8 28 47.4 30.4 44.4 C32.4 41.9 34.2 39.5 36.5 37.5 C38.8 35.5 42.5 34.2 42.3 30.8 C42 27.8 38.8 27.4 36.3 28.8 C33.6 30.3 31.5 32.6 29.2 33.2 L28.6 27 L5.3 27Z"/></g><g fill="url(#hg)"><path d="M5.2 21.5 C5.2 17.2 9.6 17.2 9.6 21.5 L9.8 34 L5.4 34Z"/><path d="M10.3 12.2 C10.3 8.6 14.8 8.6 14.8 12.2 L15 31 L10.4 31Z"/><path d="M16.7 8.2 C16.7 4.4 21.8 4.4 21.8 8.2 L21.8 30 L16.7 30Z"/><path d="M23.7 11.2 C23.7 7.6 28.5 7.6 28.5 11.2 L28.7 33 L23.7 33Z"/><path d="M5.3 30 C5.5 38 6.6 42.5 9.1 45.4 C12 48.4 16.5 48.8 20.5 48.8 C25 48.8 28 47.4 30.4 44.4 C32.4 41.9 34.2 39.5 36.5 37.5 C38.8 35.5 42.5 34.2 42.3 30.8 C42 27.8 38.8 27.4 36.3 28.8 C33.6 30.3 31.5 32.6 29.2 33.2 L28.6 27 L5.3 27Z"/></g><g stroke="#120a02" stroke-width="1.2" stroke-linecap="round" fill="none"><path d="M9.95 21 L10.05 28.5"/><path d="M15.75 12 L15.85 27"/><path d="M22.75 9.5 L22.75 26.5"/></g></svg><div class="lbl" style="padding-left:42px"><svg class="mm" style="left:5px;top:7px" width="28" height="28" viewBox="0 0 28 28"><rect x="7.5" y="1" width="10.6" height="19" rx="5.3" fill="#e0413f"/><path d="M12.8 20 L12.8 23.5" stroke="#e0413f" stroke-width="1.8"/><path d="M8 24.5 L17.8 24.5" stroke="#e0413f" stroke-width="2.2" stroke-linecap="round"/><path d="M1.3 25.5 L26 1" stroke="#0b0202" stroke-width="4" stroke-linecap="round"/><path d="M1.3 25.5 L26 1" stroke="#e2505e" stroke-width="1.9" stroke-linecap="round"/></svg><span class="lt">Bahnisikha Dhar</span></div></div>
<div class="tile" style="left:162px;top:894px"><div class="big">Ritu Lalit Choudhary</div><svg class="hand" width="50" height="54" viewBox="0 0 50 54"><defs><linearGradient id="hg" gradientUnits="userSpaceOnUse" x1="0" y1="5" x2="0" y2="49"><stop offset="0" stop-color="#fbd866"/><stop offset="0.55" stop-color="#f9d055"/><stop offset="0.85" stop-color="#f6bf3c"/><stop offset="1" stop-color="#ee9f22"/></linearGradient></defs><g stroke="#0d0803" stroke-width="2.4" stroke-linejoin="round" fill="#0d0803"><path d="M5.2 21.5 C5.2 17.2 9.6 17.2 9.6 21.5 L9.8 34 L5.4 34Z"/><path d="M10.3 12.2 C10.3 8.6 14.8 8.6 14.8 12.2 L15 31 L10.4 31Z"/><path d="M16.7 8.2 C16.7 4.4 21.8 4.4 21.8 8.2 L21.8 30 L16.7 30Z"/><path d="M23.7 11.2 C23.7 7.6 28.5 7.6 28.5 11.2 L28.7 33 L23.7 33Z"/><path d="M5.3 30 C5.5 38 6.6 42.5 9.1 45.4 C12 48.4 16.5 48.8 20.5 48.8 C25 48.8 28 47.4 30.4 44.4 C32.4 41.9 34.2 39.5 36.5 37.5 C38.8 35.5 42.5 34.2 42.3 30.8 C42 27.8 38.8 27.4 36.3 28.8 C33.6 30.3 31.5 32.6 29.2 33.2 L28.6 27 L5.3 27Z"/></g><g fill="url(#hg)"><path d="M5.2 21.5 C5.2 17.2 9.6 17.2 9.6 21.5 L9.8 34 L5.4 34Z"/><path d="M10.3 12.2 C10.3 8.6 14.8 8.6 14.8 12.2 L15 31 L10.4 31Z"/><path d="M16.7 8.2 C16.7 4.4 21.8 4.4 21.8 8.2 L21.8 30 L16.7 30Z"/><path d="M23.7 11.2 C23.7 7.6 28.5 7.6 28.5 11.2 L28.7 33 L23.7 33Z"/><path d="M5.3 30 C5.5 38 6.6 42.5 9.1 45.4 C12 48.4 16.5 48.8 20.5 48.8 C25 48.8 28 47.4 30.4 44.4 C32.4 41.9 34.2 39.5 36.5 37.5 C38.8 35.5 42.5 34.2 42.3 30.8 C42 27.8 38.8 27.4 36.3 28.8 C33.6 30.3 31.5 32.6 29.2 33.2 L28.6 27 L5.3 27Z"/></g><g stroke="#120a02" stroke-width="1.2" stroke-linecap="round" fill="none"><path d="M9.95 21 L10.05 28.5"/><path d="M15.75 12 L15.85 27"/><path d="M22.75 9.5 L22.75 26.5"/></g></svg><div class="lbl" style="padding-left:42px"><svg class="mm" style="left:5px;top:7px" width="28" height="28" viewBox="0 0 28 28"><rect x="7.5" y="1" width="10.6" height="19" rx="5.3" fill="#e0413f"/><path d="M12.8 20 L12.8 23.5" stroke="#e0413f" stroke-width="1.8"/><path d="M8 24.5 L17.8 24.5" stroke="#e0413f" stroke-width="2.2" stroke-linecap="round"/><path d="M1.3 25.5 L26 1" stroke="#0b0202" stroke-width="4" stroke-linecap="round"/><path d="M1.3 25.5 L26 1" stroke="#e2505e" stroke-width="1.9" stroke-linecap="round"/></svg><span class="lt">Ritu Lalit Choudhary</span></div></div>
<div class="tile" style="left:590px;top:894px"><div class="big">Prabhat Lodhi</div><svg class="hand" width="50" height="54" viewBox="0 0 50 54"><defs><linearGradient id="hg" gradientUnits="userSpaceOnUse" x1="0" y1="5" x2="0" y2="49"><stop offset="0" stop-color="#fbd866"/><stop offset="0.55" stop-color="#f9d055"/><stop offset="0.85" stop-color="#f6bf3c"/><stop offset="1" stop-color="#ee9f22"/></linearGradient></defs><g stroke="#0d0803" stroke-width="2.4" stroke-linejoin="round" fill="#0d0803"><path d="M5.2 21.5 C5.2 17.2 9.6 17.2 9.6 21.5 L9.8 34 L5.4 34Z"/><path d="M10.3 12.2 C10.3 8.6 14.8 8.6 14.8 12.2 L15 31 L10.4 31Z"/><path d="M16.7 8.2 C16.7 4.4 21.8 4.4 21.8 8.2 L21.8 30 L16.7 30Z"/><path d="M23.7 11.2 C23.7 7.6 28.5 7.6 28.5 11.2 L28.7 33 L23.7 33Z"/><path d="M5.3 30 C5.5 38 6.6 42.5 9.1 45.4 C12 48.4 16.5 48.8 20.5 48.8 C25 48.8 28 47.4 30.4 44.4 C32.4 41.9 34.2 39.5 36.5 37.5 C38.8 35.5 42.5 34.2 42.3 30.8 C42 27.8 38.8 27.4 36.3 28.8 C33.6 30.3 31.5 32.6 29.2 33.2 L28.6 27 L5.3 27Z"/></g><g fill="url(#hg)"><path d="M5.2 21.5 C5.2 17.2 9.6 17.2 9.6 21.5 L9.8 34 L5.4 34Z"/><path d="M10.3 12.2 C10.3 8.6 14.8 8.6 14.8 12.2 L15 31 L10.4 31Z"/><path d="M16.7 8.2 C16.7 4.4 21.8 4.4 21.8 8.2 L21.8 30 L16.7 30Z"/><path d="M23.7 11.2 C23.7 7.6 28.5 7.6 28.5 11.2 L28.7 33 L23.7 33Z"/><path d="M5.3 30 C5.5 38 6.6 42.5 9.1 45.4 C12 48.4 16.5 48.8 20.5 48.8 C25 48.8 28 47.4 30.4 44.4 C32.4 41.9 34.2 39.5 36.5 37.5 C38.8 35.5 42.5 34.2 42.3 30.8 C42 27.8 38.8 27.4 36.3 28.8 C33.6 30.3 31.5 32.6 29.2 33.2 L28.6 27 L5.3 27Z"/></g><g stroke="#120a02" stroke-width="1.2" stroke-linecap="round" fill="none"><path d="M9.95 21 L10.05 28.5"/><path d="M15.75 12 L15.85 27"/><path d="M22.75 9.5 L22.75 26.5"/></g></svg><div class="lbl" style="padding-left:10px"><span class="lt">Prabhat Lodhi</span></div></div>
<div class="tile" style="left:1018px;top:894px"><div class="av" style="background:#3b87d0"><div class="avl" style="font-size:98px;font-weight:400;top:-9px;left:0px;color:#fbfbfb;-webkit-text-stroke:2.2px #fbfbfb">m</div></div><svg class="hand" width="50" height="54" viewBox="0 0 50 54"><defs><linearGradient id="hg" gradientUnits="userSpaceOnUse" x1="0" y1="5" x2="0" y2="49"><stop offset="0" stop-color="#fbd866"/><stop offset="0.55" stop-color="#f9d055"/><stop offset="0.85" stop-color="#f6bf3c"/><stop offset="1" stop-color="#ee9f22"/></linearGradient></defs><g stroke="#0d0803" stroke-width="2.4" stroke-linejoin="round" fill="#0d0803"><path d="M5.2 21.5 C5.2 17.2 9.6 17.2 9.6 21.5 L9.8 34 L5.4 34Z"/><path d="M10.3 12.2 C10.3 8.6 14.8 8.6 14.8 12.2 L15 31 L10.4 31Z"/><path d="M16.7 8.2 C16.7 4.4 21.8 4.4 21.8 8.2 L21.8 30 L16.7 30Z"/><path d="M23.7 11.2 C23.7 7.6 28.5 7.6 28.5 11.2 L28.7 33 L23.7 33Z"/><path d="M5.3 30 C5.5 38 6.6 42.5 9.1 45.4 C12 48.4 16.5 48.8 20.5 48.8 C25 48.8 28 47.4 30.4 44.4 C32.4 41.9 34.2 39.5 36.5 37.5 C38.8 35.5 42.5 34.2 42.3 30.8 C42 27.8 38.8 27.4 36.3 28.8 C33.6 30.3 31.5 32.6 29.2 33.2 L28.6 27 L5.3 27Z"/></g><g fill="url(#hg)"><path d="M5.2 21.5 C5.2 17.2 9.6 17.2 9.6 21.5 L9.8 34 L5.4 34Z"/><path d="M10.3 12.2 C10.3 8.6 14.8 8.6 14.8 12.2 L15 31 L10.4 31Z"/><path d="M16.7 8.2 C16.7 4.4 21.8 4.4 21.8 8.2 L21.8 30 L16.7 30Z"/><path d="M23.7 11.2 C23.7 7.6 28.5 7.6 28.5 11.2 L28.7 33 L23.7 33Z"/><path d="M5.3 30 C5.5 38 6.6 42.5 9.1 45.4 C12 48.4 16.5 48.8 20.5 48.8 C25 48.8 28 47.4 30.4 44.4 C32.4 41.9 34.2 39.5 36.5 37.5 C38.8 35.5 42.5 34.2 42.3 30.8 C42 27.8 38.8 27.4 36.3 28.8 C33.6 30.3 31.5 32.6 29.2 33.2 L28.6 27 L5.3 27Z"/></g><g stroke="#120a02" stroke-width="1.2" stroke-linecap="round" fill="none"><path d="M9.95 21 L10.05 28.5"/><path d="M15.75 12 L15.85 27"/><path d="M22.75 9.5 L22.75 26.5"/></g></svg><div class="lbl" style="padding-left:42px"><svg class="mm" style="left:5px;top:7px" width="28" height="28" viewBox="0 0 28 28"><rect x="7.5" y="1" width="10.6" height="19" rx="5.3" fill="#e0413f"/><path d="M12.8 20 L12.8 23.5" stroke="#e0413f" stroke-width="1.8"/><path d="M8 24.5 L17.8 24.5" stroke="#e0413f" stroke-width="2.2" stroke-linecap="round"/><path d="M1.3 25.5 L26 1" stroke="#0b0202" stroke-width="4" stroke-linecap="round"/><path d="M1.3 25.5 L26 1" stroke="#e2505e" stroke-width="1.9" stroke-linecap="round"/></svg><span class="lt">Mansi Chavan</span></div></div>
<div class="tile" style="left:1446px;top:894px"><div class="big">Ashutosh verma</div><svg class="hand" width="50" height="54" viewBox="0 0 50 54"><defs><linearGradient id="hg" gradientUnits="userSpaceOnUse" x1="0" y1="5" x2="0" y2="49"><stop offset="0" stop-color="#fbd866"/><stop offset="0.55" stop-color="#f9d055"/><stop offset="0.85" stop-color="#f6bf3c"/><stop offset="1" stop-color="#ee9f22"/></linearGradient></defs><g stroke="#0d0803" stroke-width="2.4" stroke-linejoin="round" fill="#0d0803"><path d="M5.2 21.5 C5.2 17.2 9.6 17.2 9.6 21.5 L9.8 34 L5.4 34Z"/><path d="M10.3 12.2 C10.3 8.6 14.8 8.6 14.8 12.2 L15 31 L10.4 31Z"/><path d="M16.7 8.2 C16.7 4.4 21.8 4.4 21.8 8.2 L21.8 30 L16.7 30Z"/><path d="M23.7 11.2 C23.7 7.6 28.5 7.6 28.5 11.2 L28.7 33 L23.7 33Z"/><path d="M5.3 30 C5.5 38 6.6 42.5 9.1 45.4 C12 48.4 16.5 48.8 20.5 48.8 C25 48.8 28 47.4 30.4 44.4 C32.4 41.9 34.2 39.5 36.5 37.5 C38.8 35.5 42.5 34.2 42.3 30.8 C42 27.8 38.8 27.4 36.3 28.8 C33.6 30.3 31.5 32.6 29.2 33.2 L28.6 27 L5.3 27Z"/></g><g fill="url(#hg)"><path d="M5.2 21.5 C5.2 17.2 9.6 17.2 9.6 21.5 L9.8 34 L5.4 34Z"/><path d="M10.3 12.2 C10.3 8.6 14.8 8.6 14.8 12.2 L15 31 L10.4 31Z"/><path d="M16.7 8.2 C16.7 4.4 21.8 4.4 21.8 8.2 L21.8 30 L16.7 30Z"/><path d="M23.7 11.2 C23.7 7.6 28.5 7.6 28.5 11.2 L28.7 33 L23.7 33Z"/><path d="M5.3 30 C5.5 38 6.6 42.5 9.1 45.4 C12 48.4 16.5 48.8 20.5 48.8 C25 48.8 28 47.4 30.4 44.4 C32.4 41.9 34.2 39.5 36.5 37.5 C38.8 35.5 42.5 34.2 42.3 30.8 C42 27.8 38.8 27.4 36.3 28.8 C33.6 30.3 31.5 32.6 29.2 33.2 L28.6 27 L5.3 27Z"/></g><g stroke="#120a02" stroke-width="1.2" stroke-linecap="round" fill="none"><path d="M9.95 21 L10.05 28.5"/><path d="M15.75 12 L15.85 27"/><path d="M22.75 9.5 L22.75 26.5"/></g></svg><div class="lbl" style="padding-left:42px"><svg class="mm" style="left:5px;top:7px" width="28" height="28" viewBox="0 0 28 28"><rect x="7.5" y="1" width="10.6" height="19" rx="5.3" fill="#e0413f"/><path d="M12.8 20 L12.8 23.5" stroke="#e0413f" stroke-width="1.8"/><path d="M8 24.5 L17.8 24.5" stroke="#e0413f" stroke-width="2.2" stroke-linecap="round"/><path d="M1.3 25.5 L26 1" stroke="#0b0202" stroke-width="4" stroke-linecap="round"/><path d="M1.3 25.5 L26 1" stroke="#e2505e" stroke-width="1.9" stroke-linecap="round"/></svg><span class="lt">Ashutosh verma</span></div></div>
<div class="tile" style="left:1875px;top:894px"><div class="big">Bishal kumar</div><svg class="hand" width="50" height="54" viewBox="0 0 50 54"><defs><linearGradient id="hg" gradientUnits="userSpaceOnUse" x1="0" y1="5" x2="0" y2="49"><stop offset="0" stop-color="#fbd866"/><stop offset="0.55" stop-color="#f9d055"/><stop offset="0.85" stop-color="#f6bf3c"/><stop offset="1" stop-color="#ee9f22"/></linearGradient></defs><g stroke="#0d0803" stroke-width="2.4" stroke-linejoin="round" fill="#0d0803"><path d="M5.2 21.5 C5.2 17.2 9.6 17.2 9.6 21.5 L9.8 34 L5.4 34Z"/><path d="M10.3 12.2 C10.3 8.6 14.8 8.6 14.8 12.2 L15 31 L10.4 31Z"/><path d="M16.7 8.2 C16.7 4.4 21.8 4.4 21.8 8.2 L21.8 30 L16.7 30Z"/><path d="M23.7 11.2 C23.7 7.6 28.5 7.6 28.5 11.2 L28.7 33 L23.7 33Z"/><path d="M5.3 30 C5.5 38 6.6 42.5 9.1 45.4 C12 48.4 16.5 48.8 20.5 48.8 C25 48.8 28 47.4 30.4 44.4 C32.4 41.9 34.2 39.5 36.5 37.5 C38.8 35.5 42.5 34.2 42.3 30.8 C42 27.8 38.8 27.4 36.3 28.8 C33.6 30.3 31.5 32.6 29.2 33.2 L28.6 27 L5.3 27Z"/></g><g fill="url(#hg)"><path d="M5.2 21.5 C5.2 17.2 9.6 17.2 9.6 21.5 L9.8 34 L5.4 34Z"/><path d="M10.3 12.2 C10.3 8.6 14.8 8.6 14.8 12.2 L15 31 L10.4 31Z"/><path d="M16.7 8.2 C16.7 4.4 21.8 4.4 21.8 8.2 L21.8 30 L16.7 30Z"/><path d="M23.7 11.2 C23.7 7.6 28.5 7.6 28.5 11.2 L28.7 33 L23.7 33Z"/><path d="M5.3 30 C5.5 38 6.6 42.5 9.1 45.4 C12 48.4 16.5 48.8 20.5 48.8 C25 48.8 28 47.4 30.4 44.4 C32.4 41.9 34.2 39.5 36.5 37.5 C38.8 35.5 42.5 34.2 42.3 30.8 C42 27.8 38.8 27.4 36.3 28.8 C33.6 30.3 31.5 32.6 29.2 33.2 L28.6 27 L5.3 27Z"/></g><g stroke="#120a02" stroke-width="1.2" stroke-linecap="round" fill="none"><path d="M9.95 21 L10.05 28.5"/><path d="M15.75 12 L15.85 27"/><path d="M22.75 9.5 L22.75 26.5"/></g></svg><div class="lbl" style="padding-left:42px"><svg class="mm" style="left:5px;top:7px" width="28" height="28" viewBox="0 0 28 28"><rect x="7.5" y="1" width="10.6" height="19" rx="5.3" fill="#e0413f"/><path d="M12.8 20 L12.8 23.5" stroke="#e0413f" stroke-width="1.8"/><path d="M8 24.5 L17.8 24.5" stroke="#e0413f" stroke-width="2.2" stroke-linecap="round"/><path d="M1.3 25.5 L26 1" stroke="#0b0202" stroke-width="4" stroke-linecap="round"/><path d="M1.3 25.5 L26 1" stroke="#e2505e" stroke-width="1.9" stroke-linecap="round"/></svg><span class="lt">Bishal kumar</span></div></div>
<div class="tile" style="left:2303px;top:894px"><div class="av" style="background:#dc4b7b"><div class="avl" style="font-size:104px;font-weight:400;top:0px;left:-3px;color:#fbfbfb;-webkit-text-stroke:0.8px #fbfbfb">P</div></div><svg class="hand" width="50" height="54" viewBox="0 0 50 54"><defs><linearGradient id="hg" gradientUnits="userSpaceOnUse" x1="0" y1="5" x2="0" y2="49"><stop offset="0" stop-color="#fbd866"/><stop offset="0.55" stop-color="#f9d055"/><stop offset="0.85" stop-color="#f6bf3c"/><stop offset="1" stop-color="#ee9f22"/></linearGradient></defs><g stroke="#0d0803" stroke-width="2.4" stroke-linejoin="round" fill="#0d0803"><path d="M5.2 21.5 C5.2 17.2 9.6 17.2 9.6 21.5 L9.8 34 L5.4 34Z"/><path d="M10.3 12.2 C10.3 8.6 14.8 8.6 14.8 12.2 L15 31 L10.4 31Z"/><path d="M16.7 8.2 C16.7 4.4 21.8 4.4 21.8 8.2 L21.8 30 L16.7 30Z"/><path d="M23.7 11.2 C23.7 7.6 28.5 7.6 28.5 11.2 L28.7 33 L23.7 33Z"/><path d="M5.3 30 C5.5 38 6.6 42.5 9.1 45.4 C12 48.4 16.5 48.8 20.5 48.8 C25 48.8 28 47.4 30.4 44.4 C32.4 41.9 34.2 39.5 36.5 37.5 C38.8 35.5 42.5 34.2 42.3 30.8 C42 27.8 38.8 27.4 36.3 28.8 C33.6 30.3 31.5 32.6 29.2 33.2 L28.6 27 L5.3 27Z"/></g><g fill="url(#hg)"><path d="M5.2 21.5 C5.2 17.2 9.6 17.2 9.6 21.5 L9.8 34 L5.4 34Z"/><path d="M10.3 12.2 C10.3 8.6 14.8 8.6 14.8 12.2 L15 31 L10.4 31Z"/><path d="M16.7 8.2 C16.7 4.4 21.8 4.4 21.8 8.2 L21.8 30 L16.7 30Z"/><path d="M23.7 11.2 C23.7 7.6 28.5 7.6 28.5 11.2 L28.7 33 L23.7 33Z"/><path d="M5.3 30 C5.5 38 6.6 42.5 9.1 45.4 C12 48.4 16.5 48.8 20.5 48.8 C25 48.8 28 47.4 30.4 44.4 C32.4 41.9 34.2 39.5 36.5 37.5 C38.8 35.5 42.5 34.2 42.3 30.8 C42 27.8 38.8 27.4 36.3 28.8 C33.6 30.3 31.5 32.6 29.2 33.2 L28.6 27 L5.3 27Z"/></g><g stroke="#120a02" stroke-width="1.2" stroke-linecap="round" fill="none"><path d="M9.95 21 L10.05 28.5"/><path d="M15.75 12 L15.85 27"/><path d="M22.75 9.5 L22.75 26.5"/></g></svg><div class="lbl" style="padding-left:42px"><svg class="mm" style="left:5px;top:7px" width="28" height="28" viewBox="0 0 28 28"><rect x="7.5" y="1" width="10.6" height="19" rx="5.3" fill="#e0413f"/><path d="M12.8 20 L12.8 23.5" stroke="#e0413f" stroke-width="1.8"/><path d="M8 24.5 L17.8 24.5" stroke="#e0413f" stroke-width="2.2" stroke-linecap="round"/><path d="M1.3 25.5 L26 1" stroke="#0b0202" stroke-width="4" stroke-linecap="round"/><path d="M1.3 25.5 L26 1" stroke="#e2505e" stroke-width="1.9" stroke-linecap="round"/></svg><span class="lt">Prashant Dongare</span></div></div>
<div class="tile" style="left:162px;top:1140px"><div class="big">Vineet</div><svg class="hand" width="50" height="54" viewBox="0 0 50 54"><defs><linearGradient id="hg" gradientUnits="userSpaceOnUse" x1="0" y1="5" x2="0" y2="49"><stop offset="0" stop-color="#fbd866"/><stop offset="0.55" stop-color="#f9d055"/><stop offset="0.85" stop-color="#f6bf3c"/><stop offset="1" stop-color="#ee9f22"/></linearGradient></defs><g stroke="#0d0803" stroke-width="2.4" stroke-linejoin="round" fill="#0d0803"><path d="M5.2 21.5 C5.2 17.2 9.6 17.2 9.6 21.5 L9.8 34 L5.4 34Z"/><path d="M10.3 12.2 C10.3 8.6 14.8 8.6 14.8 12.2 L15 31 L10.4 31Z"/><path d="M16.7 8.2 C16.7 4.4 21.8 4.4 21.8 8.2 L21.8 30 L16.7 30Z"/><path d="M23.7 11.2 C23.7 7.6 28.5 7.6 28.5 11.2 L28.7 33 L23.7 33Z"/><path d="M5.3 30 C5.5 38 6.6 42.5 9.1 45.4 C12 48.4 16.5 48.8 20.5 48.8 C25 48.8 28 47.4 30.4 44.4 C32.4 41.9 34.2 39.5 36.5 37.5 C38.8 35.5 42.5 34.2 42.3 30.8 C42 27.8 38.8 27.4 36.3 28.8 C33.6 30.3 31.5 32.6 29.2 33.2 L28.6 27 L5.3 27Z"/></g><g fill="url(#hg)"><path d="M5.2 21.5 C5.2 17.2 9.6 17.2 9.6 21.5 L9.8 34 L5.4 34Z"/><path d="M10.3 12.2 C10.3 8.6 14.8 8.6 14.8 12.2 L15 31 L10.4 31Z"/><path d="M16.7 8.2 C16.7 4.4 21.8 4.4 21.8 8.2 L21.8 30 L16.7 30Z"/><path d="M23.7 11.2 C23.7 7.6 28.5 7.6 28.5 11.2 L28.7 33 L23.7 33Z"/><path d="M5.3 30 C5.5 38 6.6 42.5 9.1 45.4 C12 48.4 16.5 48.8 20.5 48.8 C25 48.8 28 47.4 30.4 44.4 C32.4 41.9 34.2 39.5 36.5 37.5 C38.8 35.5 42.5 34.2 42.3 30.8 C42 27.8 38.8 27.4 36.3 28.8 C33.6 30.3 31.5 32.6 29.2 33.2 L28.6 27 L5.3 27Z"/></g><g stroke="#120a02" stroke-width="1.2" stroke-linecap="round" fill="none"><path d="M9.95 21 L10.05 28.5"/><path d="M15.75 12 L15.85 27"/><path d="M22.75 9.5 L22.75 26.5"/></g></svg><div class="lbl" style="padding-left:42px"><svg class="mm" style="left:5px;top:7px" width="28" height="28" viewBox="0 0 28 28"><rect x="7.5" y="1" width="10.6" height="19" rx="5.3" fill="#e0413f"/><path d="M12.8 20 L12.8 23.5" stroke="#e0413f" stroke-width="1.8"/><path d="M8 24.5 L17.8 24.5" stroke="#e0413f" stroke-width="2.2" stroke-linecap="round"/><path d="M1.3 25.5 L26 1" stroke="#0b0202" stroke-width="4" stroke-linecap="round"/><path d="M1.3 25.5 L26 1" stroke="#e2505e" stroke-width="1.9" stroke-linecap="round"/></svg><span class="lt">Vineet</span></div></div>
<div class="tile" style="left:590px;top:1140px"><div class="ph" style="width:234px;left:91px;background:#3a3a32"><svg width="234" height="234" viewBox="0 0 234 234" style="position:absolute;left:0;top:0"><defs><filter id="kb" x="-5%" y="-5%" width="110%" height="110%"><feGaussianBlur stdDeviation="1.1"/></filter><filter id="kn" x="0" y="0" width="100%" height="100%"><feTurbulence type="fractalNoise" baseFrequency="0.08 0.5" numOctaves="2" seed="5" result="n"/><feColorMatrix in="n" type="matrix" values="0 0 0 0 0.85  0 0 0 0 0.7  0 0 0 0 0.45  0 0 0 1.6 -0.75"/></filter></defs><g filter="url(#kb)"><rect x="-5" y="-5" width="244" height="50" fill="#3b3d34"/><rect x="172" y="-5" width="70" height="45" fill="#86857c"/><rect x="180" y="0" width="14" height="38" fill="#b4ad98"/><rect x="205" y="0" width="30" height="8" fill="#d8d8d0"/><path d="M-5 20 C15 25 40 35 62 50 L62 190 L-5 190Z" fill="#8c6a42"/><path d="M160 35 C185 25 210 30 240 25 L240 165 L165 165Z" fill="#9c6a3a"/><rect x="-5" y="20" width="70" height="170" filter="url(#kn)" opacity="0.6"/><rect x="160" y="25" width="80" height="140" filter="url(#kn)" opacity="0.6"/><path d="M205 158 L240 158 L240 200 L200 200Z" fill="#6e8c3c"/><path d="M78 -5 L162 -5 C170 40 190 100 222 150 C232 170 222 192 200 202 L30 202 C8 196 -2 180 6 162 C30 128 62 60 78 -5Z" fill="#e8e8ef"/><g stroke="#b4b4bc" stroke-width="1.4" opacity="0.7"><path d="M88 2 L84 58"/><path d="M98 2 L96 58"/><path d="M110 2 L112 58"/><path d="M124 2 L127 58"/><path d="M138 2 L142 58"/><path d="M150 2 L156 58"/></g><rect x="-5" y="200" width="244" height="40" fill="#e6e6e6"/><ellipse cx="92" cy="34" rx="18" ry="24" fill="#7a5236"/><path d="M73 28 C72 10 82 4 93 4 C106 5 112 14 110 28 L74 28Z" fill="#17120f"/><rect x="74" y="28" width="36" height="11" rx="3" fill="#c0d2d2" stroke="#1c1c1c" stroke-width="2"/><path d="M42 92 C52 70 70 60 85 58 L112 60 C140 68 168 92 198 118 L188 134 C168 124 152 110 142 102 L142 146 L75 146 C70 126 66 112 60 104 L47 134 L20 130Z" fill="#131313"/><path d="M20 124 L47 134 C62 138 78 128 90 128 L86 140 C70 144 46 144 18 140Z" fill="#7a5236"/><path d="M186 134 L198 118 C212 128 226 138 236 144 L236 160 C222 150 202 146 186 134Z" fill="#7a5236"/><path d="M38 154 C58 128 110 132 150 142 C172 152 182 172 176 196 L172 240 L118 240 C108 218 88 204 58 194 C42 188 32 172 38 154Z" fill="#c8d6de"/><path d="M146 188 C162 182 184 192 188 212 L184 240 L150 240 C144 224 140 204 146 188Z" fill="#4e4634"/></g></svg></div><svg class="hand" width="50" height="54" viewBox="0 0 50 54"><defs><linearGradient id="hg" gradientUnits="userSpaceOnUse" x1="0" y1="5" x2="0" y2="49"><stop offset="0" stop-color="#fbd866"/><stop offset="0.55" stop-color="#f9d055"/><stop offset="0.85" stop-color="#f6bf3c"/><stop offset="1" stop-color="#ee9f22"/></linearGradient></defs><g stroke="#0d0803" stroke-width="2.4" stroke-linejoin="round" fill="#0d0803"><path d="M5.2 21.5 C5.2 17.2 9.6 17.2 9.6 21.5 L9.8 34 L5.4 34Z"/><path d="M10.3 12.2 C10.3 8.6 14.8 8.6 14.8 12.2 L15 31 L10.4 31Z"/><path d="M16.7 8.2 C16.7 4.4 21.8 4.4 21.8 8.2 L21.8 30 L16.7 30Z"/><path d="M23.7 11.2 C23.7 7.6 28.5 7.6 28.5 11.2 L28.7 33 L23.7 33Z"/><path d="M5.3 30 C5.5 38 6.6 42.5 9.1 45.4 C12 48.4 16.5 48.8 20.5 48.8 C25 48.8 28 47.4 30.4 44.4 C32.4 41.9 34.2 39.5 36.5 37.5 C38.8 35.5 42.5 34.2 42.3 30.8 C42 27.8 38.8 27.4 36.3 28.8 C33.6 30.3 31.5 32.6 29.2 33.2 L28.6 27 L5.3 27Z"/></g><g fill="url(#hg)"><path d="M5.2 21.5 C5.2 17.2 9.6 17.2 9.6 21.5 L9.8 34 L5.4 34Z"/><path d="M10.3 12.2 C10.3 8.6 14.8 8.6 14.8 12.2 L15 31 L10.4 31Z"/><path d="M16.7 8.2 C16.7 4.4 21.8 4.4 21.8 8.2 L21.8 30 L16.7 30Z"/><path d="M23.7 11.2 C23.7 7.6 28.5 7.6 28.5 11.2 L28.7 33 L23.7 33Z"/><path d="M5.3 30 C5.5 38 6.6 42.5 9.1 45.4 C12 48.4 16.5 48.8 20.5 48.8 C25 48.8 28 47.4 30.4 44.4 C32.4 41.9 34.2 39.5 36.5 37.5 C38.8 35.5 42.5 34.2 42.3 30.8 C42 27.8 38.8 27.4 36.3 28.8 C33.6 30.3 31.5 32.6 29.2 33.2 L28.6 27 L5.3 27Z"/></g><g stroke="#120a02" stroke-width="1.2" stroke-linecap="round" fill="none"><path d="M9.95 21 L10.05 28.5"/><path d="M15.75 12 L15.85 27"/><path d="M22.75 9.5 L22.75 26.5"/></g></svg><div class="lbl" style="padding-left:42px"><svg class="mm" style="left:5px;top:7px" width="28" height="28" viewBox="0 0 28 28"><rect x="7.5" y="1" width="10.6" height="19" rx="5.3" fill="#e0413f"/><path d="M12.8 20 L12.8 23.5" stroke="#e0413f" stroke-width="1.8"/><path d="M8 24.5 L17.8 24.5" stroke="#e0413f" stroke-width="2.2" stroke-linecap="round"/><path d="M1.3 25.5 L26 1" stroke="#0b0202" stroke-width="4" stroke-linecap="round"/><path d="M1.3 25.5 L26 1" stroke="#e2505e" stroke-width="1.9" stroke-linecap="round"/></svg><span class="lt">Kunal Titare</span></div></div>
<div class="tile" style="left:1018px;top:1140px"><div class="ph" style="width:234px;left:91px;background:#030201"><svg width="234" height="234" viewBox="0 0 234 234" style="position:absolute;left:0;top:0"><defs><radialGradient id="sg" cx="0.5" cy="0.5" r="0.5"><stop offset="0" stop-color="#ffffff"/><stop offset="0.35" stop-color="#fff6d0"/><stop offset="0.6" stop-color="#ffb040" stop-opacity="0.8"/><stop offset="1" stop-color="#ff6010" stop-opacity="0"/></radialGradient><filter id="sb" x="-50%" y="-50%" width="200%" height="200%"><feGaussianBlur stdDeviation="6"/></filter><filter id="sb2" x="-50%" y="-50%" width="200%" height="200%"><feGaussianBlur stdDeviation="3"/></filter></defs><ellipse cx="118" cy="105" rx="14" ry="30" fill="#ff6a10" opacity="0.45" filter="url(#sb)"/><g fill="none"><path d="M131 139 L72.1 71.3" stroke="#ffd890" stroke-width="1.44" stroke-linecap="round" opacity="0.70"/><path d="M66.1 71.3 L78.0 71.3 M72.1 65.3 L72.1 77.2" stroke="#fff4d0" stroke-width="0.9" opacity="0.9"/><path d="M131 139 L108.3 59.9" stroke="#e8f8e0" stroke-width="0.88" stroke-linecap="round" opacity="0.98"/><path d="M131 139 L74.3 66.6" stroke="#e8f8e0" stroke-width="0.77" stroke-linecap="round" opacity="0.62"/><path d="M69.2 66.6 L79.3 66.6 M74.3 61.5 L74.3 71.6" stroke="#fff4d0" stroke-width="0.9" opacity="0.9"/><path d="M131 139 L60.4 90.0" stroke="#ffe4a8" stroke-width="0.91" stroke-linecap="round" opacity="0.88"/><path d="M54.1 90.0 L66.7 90.0 M60.4 83.7 L60.4 96.3" stroke="#fff4d0" stroke-width="0.9" opacity="0.9"/><path d="M131 139 L74.2 46.7" stroke="#e8f8e0" stroke-width="1.14" stroke-linecap="round" opacity="0.81"/><path d="M131 139 L71.0 104.4" stroke="#fff0c0" stroke-width="0.81" stroke-linecap="round" opacity="0.79"/><path d="M131 139 L35.7 84.4" stroke="#e8f8e0" stroke-width="1.25" stroke-linecap="round" opacity="0.71"/><path d="M131 139 L108.1 96.4" stroke="#ffd890" stroke-width="1.37" stroke-linecap="round" opacity="0.63"/><path d="M104.1 96.4 L112.1 96.4 M108.1 92.4 L108.1 100.4" stroke="#fff4d0" stroke-width="0.9" opacity="0.9"/><path d="M131 139 L103.6 19.9" stroke="#fff0c0" stroke-width="0.86" stroke-linecap="round" opacity="0.75"/><path d="M131 139 L83.4 57.7" stroke="#ffd890" stroke-width="0.78" stroke-linecap="round" opacity="0.66"/><path d="M131 139 L92.4 113.6" stroke="#ffe4a8" stroke-width="1.29" stroke-linecap="round" opacity="0.88"/><path d="M131 139 L101.1 99.3" stroke="#ffd890" stroke-width="1.23" stroke-linecap="round" opacity="0.97"/><path d="M131 139 L78.3 102.0" stroke="#ffe4a8" stroke-width="1.33" stroke-linecap="round" opacity="0.99"/><path d="M72.8 102.0 L83.9 102.0 M78.3 96.5 L78.3 107.6" stroke="#fff4d0" stroke-width="0.9" opacity="0.9"/><path d="M131 139 L57.6 102.2" stroke="#f2b060" stroke-width="0.76" stroke-linecap="round" opacity="0.72"/><path d="M54.3 102.2 L60.9 102.2 M57.6 98.9 L57.6 105.5" stroke="#fff4d0" stroke-width="0.9" opacity="0.9"/><path d="M131 139 L56.3 55.0" stroke="#f2b060" stroke-width="1.19" stroke-linecap="round" opacity="0.89"/><path d="M131 139 L72.4 62.6" stroke="#ffc878" stroke-width="1.36" stroke-linecap="round" opacity="0.65"/><path d="M131 139 L70.0 62.3" stroke="#ffe4a8" stroke-width="1.02" stroke-linecap="round" opacity="0.87"/><path d="M131 139 L87.1 88.1" stroke="#f2b060" stroke-width="1.55" stroke-linecap="round" opacity="0.61"/><path d="M131 139 L104.8 17.1" stroke="#fff0c0" stroke-width="1.26" stroke-linecap="round" opacity="0.75"/><path d="M131 139 L95.5 43.8" stroke="#e8f8e0" stroke-width="0.77" stroke-linecap="round" opacity="0.64"/><path d="M91.4 43.8 L99.5 43.8 M95.5 39.8 L95.5 47.8" stroke="#fff4d0" stroke-width="0.9" opacity="0.9"/><path d="M131 139 L83.7 96.8" stroke="#f2b060" stroke-width="1.36" stroke-linecap="round" opacity="0.76"/><path d="M131 139 L92.4 106.2" stroke="#e8f8e0" stroke-width="1.11" stroke-linecap="round" opacity="0.79"/><path d="M131 139 L99.2 68.8" stroke="#e8f8e0" stroke-width="1.38" stroke-linecap="round" opacity="0.61"/><path d="M131 139 L104.9 67.7" stroke="#f2b060" stroke-width="0.72" stroke-linecap="round" opacity="0.98"/><path d="M98.8 67.7 L111.0 67.7 M104.9 61.6 L104.9 73.8" stroke="#fff4d0" stroke-width="0.9" opacity="0.9"/><path d="M131 139 L103.3 29.7" stroke="#ffc878" stroke-width="1.53" stroke-linecap="round" opacity="0.70"/><path d="M99.1 29.7 L107.5 29.7 M103.3 25.5 L103.3 33.9" stroke="#fff4d0" stroke-width="0.9" opacity="0.9"/><path d="M131 139 L75.0 112.9" stroke="#ffc878" stroke-width="1.25" stroke-linecap="round" opacity="0.81"/><path d="M131 139 L160.1 79.9" stroke="#ffe4a8" stroke-width="1.29" stroke-linecap="round" opacity="0.78"/><path d="M131 139 L161.2 85.0" stroke="#ffe4a8" stroke-width="1.06" stroke-linecap="round" opacity="0.70"/><path d="M131 139 L119.4 65.3" stroke="#ffd890" stroke-width="1.49" stroke-linecap="round" opacity="0.75"/><path d="M131 139 L150.4 87.7" stroke="#ffe4a8" stroke-width="0.89" stroke-linecap="round" opacity="0.65"/><path d="M143.8 87.7 L157.0 87.7 M150.4 81.1 L150.4 94.3" stroke="#fff4d0" stroke-width="0.9" opacity="0.9"/><path d="M131 139 L122.5 81.3" stroke="#fff0c0" stroke-width="1.34" stroke-linecap="round" opacity="0.98"/><path d="M118.9 81.3 L126.2 81.3 M122.5 77.6 L122.5 85.0" stroke="#fff4d0" stroke-width="0.9" opacity="0.9"/><path d="M131 139 L170.0 67.2" stroke="#f2b060" stroke-width="1.12" stroke-linecap="round" opacity="0.97"/><path d="M131 139 L124.4 85.9" stroke="#f2b060" stroke-width="1.26" stroke-linecap="round" opacity="0.80"/><path d="M118.1 85.9 L130.8 85.9 M124.4 79.5 L124.4 92.2" stroke="#fff4d0" stroke-width="0.9" opacity="0.9"/><path d="M131 139 L125.2 96.1" stroke="#e8f8e0" stroke-width="1.11" stroke-linecap="round" opacity="0.63"/><path d="M118.7 96.1 L131.6 96.1 M125.2 89.6 L125.2 102.6" stroke="#fff4d0" stroke-width="0.9" opacity="0.9"/><path d="M131 139 L149.2 92.7" stroke="#fff0c0" stroke-width="1.31" stroke-linecap="round" opacity="0.71"/><path d="M143.6 92.7 L154.8 92.7 M149.2 87.1 L149.2 98.3" stroke="#fff4d0" stroke-width="0.9" opacity="0.9"/><path d="M131 139 L143.9 75.7" stroke="#e8f8e0" stroke-width="0.72" stroke-linecap="round" opacity="0.65"/><path d="M131 139 L183.6 85.1" stroke="#fff0c0" stroke-width="1.39" stroke-linecap="round" opacity="0.71"/><path d="M131 139 L176.1 84.9" stroke="#fff0c0" stroke-width="1.59" stroke-linecap="round" opacity="0.65"/><path d="M170.9 84.9 L181.2 84.9 M176.1 79.8 L176.1 90.1" stroke="#fff4d0" stroke-width="0.9" opacity="0.9"/><path d="M131 139 L167.4 93.6" stroke="#ffc878" stroke-width="1.43" stroke-linecap="round" opacity="0.98"/><path d="M131 139 L166.8 104.4" stroke="#ffd890" stroke-width="1.44" stroke-linecap="round" opacity="0.70"/><path d="M131 139 L208.2 156.6" stroke="#f2b060" stroke-width="1.18" stroke-linecap="round" opacity="0.61"/><path d="M202.1 156.6 L214.3 156.6 M208.2 150.5 L208.2 162.7" stroke="#fff4d0" stroke-width="0.9" opacity="0.9"/><path d="M131 139 L197.7 88.4" stroke="#e8f8e0" stroke-width="1.33" stroke-linecap="round" opacity="0.81"/><path d="M131 139 L171.6 99.5" stroke="#ffd890" stroke-width="1.05" stroke-linecap="round" opacity="0.92"/><path d="M131 139 L201.1 144.0" stroke="#fff0c0" stroke-width="1.07" stroke-linecap="round" opacity="0.96"/><path d="M196.3 144.0 L205.9 144.0 M201.1 139.2 L201.1 148.8" stroke="#fff4d0" stroke-width="0.9" opacity="0.9"/><path d="M131 139 L185.5 68.1" stroke="#ffd890" stroke-width="1.26" stroke-linecap="round" opacity="0.96"/><path d="M180.2 68.1 L190.7 68.1 M185.5 62.8 L185.5 73.4" stroke="#fff4d0" stroke-width="0.9" opacity="0.9"/><path d="M131 139 L166.4 104.8" stroke="#e8f8e0" stroke-width="1.42" stroke-linecap="round" opacity="0.98"/><path d="M131 139 L113.5 167.2" stroke="#ffc878" stroke-width="1.58" stroke-linecap="round" opacity="0.64"/><path d="M131 139 L133.5 161.8" stroke="#ffc878" stroke-width="1.53" stroke-linecap="round" opacity="0.65"/><path d="M129.0 161.8 L138.1 161.8 M133.5 157.2 L133.5 166.4" stroke="#fff4d0" stroke-width="0.9" opacity="0.9"/><path d="M131 139 L147.8 178.9" stroke="#fff0c0" stroke-width="1.58" stroke-linecap="round" opacity="0.81"/><path d="M131 139 L139.1 182.3" stroke="#ffe4a8" stroke-width="0.94" stroke-linecap="round" opacity="0.89"/><path d="M134.1 182.3 L144.1 182.3 M139.1 177.3 L139.1 187.3" stroke="#fff4d0" stroke-width="0.9" opacity="0.9"/><path d="M131 139 L131.2 177.1" stroke="#fff0c0" stroke-width="1.10" stroke-linecap="round" opacity="0.82"/><path d="M131 139 L102.3 166.0" stroke="#f2b060" stroke-width="1.53" stroke-linecap="round" opacity="0.69"/><path d="M131 139 L116.0 191.6" stroke="#f2b060" stroke-width="1.42" stroke-linecap="round" opacity="0.67"/><path d="M109.8 191.6 L122.1 191.6 M116.0 185.4 L116.0 197.7" stroke="#fff4d0" stroke-width="0.9" opacity="0.9"/><path d="M131 139 L137.9 164.2" stroke="#ffd890" stroke-width="1.12" stroke-linecap="round" opacity="1.00"/><path d="M131 139 L5 152" stroke="#f0c8b8" stroke-width="1.8" stroke-linecap="round"/><path d="M5 152 m-7 0 h14 m-7 -7 v14" stroke="#fff4e0" stroke-width="1.2"/><path d="M131 139 L231 175" stroke="#c8f4e4" stroke-width="2.2" stroke-linecap="round"/><path d="M228 174 m-9 0 h18 m-9 -9 v18" stroke="#e8fff4" stroke-width="1.4"/><path d="M131 139 L233 122" stroke="#f8d090" stroke-width="2" stroke-linecap="round"/></g><circle cx="131" cy="139" r="34" fill="url(#sg)"/><circle cx="131" cy="139" r="17" fill="#ffffff" filter="url(#sb2)"/></svg></div><svg class="hand" width="50" height="54" viewBox="0 0 50 54"><defs><linearGradient id="hg" gradientUnits="userSpaceOnUse" x1="0" y1="5" x2="0" y2="49"><stop offset="0" stop-color="#fbd866"/><stop offset="0.55" stop-color="#f9d055"/><stop offset="0.85" stop-color="#f6bf3c"/><stop offset="1" stop-color="#ee9f22"/></linearGradient></defs><g stroke="#0d0803" stroke-width="2.4" stroke-linejoin="round" fill="#0d0803"><path d="M5.2 21.5 C5.2 17.2 9.6 17.2 9.6 21.5 L9.8 34 L5.4 34Z"/><path d="M10.3 12.2 C10.3 8.6 14.8 8.6 14.8 12.2 L15 31 L10.4 31Z"/><path d="M16.7 8.2 C16.7 4.4 21.8 4.4 21.8 8.2 L21.8 30 L16.7 30Z"/><path d="M23.7 11.2 C23.7 7.6 28.5 7.6 28.5 11.2 L28.7 33 L23.7 33Z"/><path d="M5.3 30 C5.5 38 6.6 42.5 9.1 45.4 C12 48.4 16.5 48.8 20.5 48.8 C25 48.8 28 47.4 30.4 44.4 C32.4 41.9 34.2 39.5 36.5 37.5 C38.8 35.5 42.5 34.2 42.3 30.8 C42 27.8 38.8 27.4 36.3 28.8 C33.6 30.3 31.5 32.6 29.2 33.2 L28.6 27 L5.3 27Z"/></g><g fill="url(#hg)"><path d="M5.2 21.5 C5.2 17.2 9.6 17.2 9.6 21.5 L9.8 34 L5.4 34Z"/><path d="M10.3 12.2 C10.3 8.6 14.8 8.6 14.8 12.2 L15 31 L10.4 31Z"/><path d="M16.7 8.2 C16.7 4.4 21.8 4.4 21.8 8.2 L21.8 30 L16.7 30Z"/><path d="M23.7 11.2 C23.7 7.6 28.5 7.6 28.5 11.2 L28.7 33 L23.7 33Z"/><path d="M5.3 30 C5.5 38 6.6 42.5 9.1 45.4 C12 48.4 16.5 48.8 20.5 48.8 C25 48.8 28 47.4 30.4 44.4 C32.4 41.9 34.2 39.5 36.5 37.5 C38.8 35.5 42.5 34.2 42.3 30.8 C42 27.8 38.8 27.4 36.3 28.8 C33.6 30.3 31.5 32.6 29.2 33.2 L28.6 27 L5.3 27Z"/></g><g stroke="#120a02" stroke-width="1.2" stroke-linecap="round" fill="none"><path d="M9.95 21 L10.05 28.5"/><path d="M15.75 12 L15.85 27"/><path d="M22.75 9.5 L22.75 26.5"/></g></svg><div class="lbl" style="padding-left:42px"><svg class="mm" style="left:5px;top:7px" width="28" height="28" viewBox="0 0 28 28"><rect x="7.5" y="1" width="10.6" height="19" rx="5.3" fill="#e0413f"/><path d="M12.8 20 L12.8 23.5" stroke="#e0413f" stroke-width="1.8"/><path d="M8 24.5 L17.8 24.5" stroke="#e0413f" stroke-width="2.2" stroke-linecap="round"/><path d="M1.3 25.5 L26 1" stroke="#0b0202" stroke-width="4" stroke-linecap="round"/><path d="M1.3 25.5 L26 1" stroke="#e2505e" stroke-width="1.9" stroke-linecap="round"/></svg><span class="lt">Abhirup Dey</span></div></div>
<div class="tile" style="left:1446px;top:1140px"><div class="big">Santosh Kumar Me...</div><svg class="hand" width="50" height="54" viewBox="0 0 50 54"><defs><linearGradient id="hg" gradientUnits="userSpaceOnUse" x1="0" y1="5" x2="0" y2="49"><stop offset="0" stop-color="#fbd866"/><stop offset="0.55" stop-color="#f9d055"/><stop offset="0.85" stop-color="#f6bf3c"/><stop offset="1" stop-color="#ee9f22"/></linearGradient></defs><g stroke="#0d0803" stroke-width="2.4" stroke-linejoin="round" fill="#0d0803"><path d="M5.2 21.5 C5.2 17.2 9.6 17.2 9.6 21.5 L9.8 34 L5.4 34Z"/><path d="M10.3 12.2 C10.3 8.6 14.8 8.6 14.8 12.2 L15 31 L10.4 31Z"/><path d="M16.7 8.2 C16.7 4.4 21.8 4.4 21.8 8.2 L21.8 30 L16.7 30Z"/><path d="M23.7 11.2 C23.7 7.6 28.5 7.6 28.5 11.2 L28.7 33 L23.7 33Z"/><path d="M5.3 30 C5.5 38 6.6 42.5 9.1 45.4 C12 48.4 16.5 48.8 20.5 48.8 C25 48.8 28 47.4 30.4 44.4 C32.4 41.9 34.2 39.5 36.5 37.5 C38.8 35.5 42.5 34.2 42.3 30.8 C42 27.8 38.8 27.4 36.3 28.8 C33.6 30.3 31.5 32.6 29.2 33.2 L28.6 27 L5.3 27Z"/></g><g fill="url(#hg)"><path d="M5.2 21.5 C5.2 17.2 9.6 17.2 9.6 21.5 L9.8 34 L5.4 34Z"/><path d="M10.3 12.2 C10.3 8.6 14.8 8.6 14.8 12.2 L15 31 L10.4 31Z"/><path d="M16.7 8.2 C16.7 4.4 21.8 4.4 21.8 8.2 L21.8 30 L16.7 30Z"/><path d="M23.7 11.2 C23.7 7.6 28.5 7.6 28.5 11.2 L28.7 33 L23.7 33Z"/><path d="M5.3 30 C5.5 38 6.6 42.5 9.1 45.4 C12 48.4 16.5 48.8 20.5 48.8 C25 48.8 28 47.4 30.4 44.4 C32.4 41.9 34.2 39.5 36.5 37.5 C38.8 35.5 42.5 34.2 42.3 30.8 C42 27.8 38.8 27.4 36.3 28.8 C33.6 30.3 31.5 32.6 29.2 33.2 L28.6 27 L5.3 27Z"/></g><g stroke="#120a02" stroke-width="1.2" stroke-linecap="round" fill="none"><path d="M9.95 21 L10.05 28.5"/><path d="M15.75 12 L15.85 27"/><path d="M22.75 9.5 L22.75 26.5"/></g></svg><div class="lbl" style="padding-left:42px"><svg class="mm" style="left:5px;top:7px" width="28" height="28" viewBox="0 0 28 28"><rect x="7.5" y="1" width="10.6" height="19" rx="5.3" fill="#e0413f"/><path d="M12.8 20 L12.8 23.5" stroke="#e0413f" stroke-width="1.8"/><path d="M8 24.5 L17.8 24.5" stroke="#e0413f" stroke-width="2.2" stroke-linecap="round"/><path d="M1.3 25.5 L26 1" stroke="#0b0202" stroke-width="4" stroke-linecap="round"/><path d="M1.3 25.5 L26 1" stroke="#e2505e" stroke-width="1.9" stroke-linecap="round"/></svg><span class="lt">Santosh Kumar Mehta</span></div></div>
<div class="tile active" style="left:1875px;top:1140px"><div class="big">Vaibhav A</div><div class="lbl" style="padding-left:10px"><span class="lt">Vaibhav A</span></div></div>
<div class="tile" style="left:2303px;top:1140px"><div class="big">Host</div><div class="lbl" style="padding-left:42px"><svg class="mm" style="left:5px;top:7px" width="28" height="28" viewBox="0 0 28 28"><rect x="7.5" y="1" width="10.6" height="19" rx="5.3" fill="#e0413f"/><path d="M12.8 20 L12.8 23.5" stroke="#e0413f" stroke-width="1.8"/><path d="M8 24.5 L17.8 24.5" stroke="#e0413f" stroke-width="2.2" stroke-linecap="round"/><path d="M1.3 25.5 L26 1" stroke="#0b0202" stroke-width="4" stroke-linecap="round"/><path d="M1.3 25.5 L26 1" stroke="#e2505e" stroke-width="1.9" stroke-linecap="round"/></svg><span class="lt">Host</span></div></div>
<div class="tile" style="left:1018px;top:1386px"><div class="ph" style="width:234px;left:91px;background:#ddd3ca"><svg width="234" height="234" viewBox="0 0 234 234" style="position:absolute;left:0;top:0"><defs><filter id="bl2" x="-20%" y="-10%" width="140%" height="120%"><feGaussianBlur stdDeviation="1.4"/></filter></defs><g filter="url(#bl2)"><path d="M112 44 L140 44 C143 60 144 80 143 104 L111 104 C109 84 109 62 112 44Z" fill="#c6c2be"/><path d="M110 22 C111 12 122 8 132 10 C144 13 148 26 148 46 C148 62 150 76 148 82 L140 82 C138 70 134 56 128 44 L116 40 C114 52 113 64 110 72 C108 56 108 38 110 22Z" fill="#0c0a0a"/><path d="M82 90 C95 88 120 90 146 92 L146 103 C120 102 96 102 84 101Z" fill="#e9d4c4"/><path d="M105 104 L147 104 C150 130 148 170 146 240 L107 240 C102 192 101 150 105 104Z" fill="#080707"/></g></svg></div><div class="lbl" style="padding-left:42px"><svg class="mm" style="left:5px;top:7px" width="28" height="28" viewBox="0 0 28 28"><rect x="7.5" y="1" width="10.6" height="19" rx="5.3" fill="#e0413f"/><path d="M12.8 20 L12.8 23.5" stroke="#e0413f" stroke-width="1.8"/><path d="M8 24.5 L17.8 24.5" stroke="#e0413f" stroke-width="2.2" stroke-linecap="round"/><path d="M1.3 25.5 L26 1" stroke="#0b0202" stroke-width="4" stroke-linecap="round"/><path d="M1.3 25.5 L26 1" stroke="#e2505e" stroke-width="1.9" stroke-linecap="round"/></svg><span class="lt">PRIYA singh</span></div></div>
<div class="tile" style="left:1446px;top:1386px"><div class="big">MD AHAD KHAN</div><div class="lbl" style="padding-left:42px"><svg class="mm" style="left:5px;top:7px" width="28" height="28" viewBox="0 0 28 28"><rect x="7.5" y="1" width="10.6" height="19" rx="5.3" fill="#e0413f"/><path d="M12.8 20 L12.8 23.5" stroke="#e0413f" stroke-width="1.8"/><path d="M8 24.5 L17.8 24.5" stroke="#e0413f" stroke-width="2.2" stroke-linecap="round"/><path d="M1.3 25.5 L26 1" stroke="#0b0202" stroke-width="4" stroke-linecap="round"/><path d="M1.3 25.5 L26 1" stroke="#e2505e" stroke-width="1.9" stroke-linecap="round"/></svg><span class="lt">MD AHAD KHAN</span></div></div>
<div class="activebd" style="left:1874px;top:1140px;width:417px;height:234px"></div>
<div class="tb"></div>
<svg class="ic" style="left:72px;top:1700px" width="40" height="56" viewBox="0 0 40 56"><rect x="11.8" y="6.7" width="16.4" height="30.6" rx="8.2" fill="#a9a9a9"/><path d="M7.5 27 C7.5 36 12.5 42 20 42 C27.5 42 32.5 36 32.5 27" stroke="#a9a9a9" stroke-width="3" fill="none" stroke-linecap="round"/><path d="M20 42 L20 49" stroke="#a9a9a9" stroke-width="3"/><path d="M13 49.5 L27 49.5" stroke="#a9a9a9" stroke-width="3.2" stroke-linecap="round"/></svg>
<div class="tl" style="left:92px;color:#bdbdbd">Mute</div>
<svg class="ic" style="left:146px;top:1722px" width="20" height="16" viewBox="0 0 20 16"><path d="M3.8 11.8 L10 5.6 L16.2 11.8" stroke="#c4c4c4" stroke-width="3" fill="none" stroke-linecap="round" stroke-linejoin="round"/></svg>
<svg class="ic" style="left:240px;top:1700px" width="60" height="56" viewBox="0 0 60 56"><rect x="5" y="16" width="37" height="27" rx="5" fill="#a9a9a9"/><path d="M43 25 L55 17 L55 42 L43 34 Z" fill="#a9a9a9" stroke="#a9a9a9" stroke-width="1.5" stroke-linejoin="round"/><path d="M7 51 L53 6" stroke="#1b1b1b" stroke-width="6" stroke-linecap="round"/><path d="M7 51 L53 6" stroke="#e6606a" stroke-width="3" stroke-linecap="round"/></svg>
<div class="tl" style="left:270px;color:#bdbdbd">Start Video</div>
<svg class="ic" style="left:324px;top:1722px" width="20" height="16" viewBox="0 0 20 16"><path d="M3.8 11.8 L10 5.6 L16.2 11.8" stroke="#c4c4c4" stroke-width="3" fill="none" stroke-linecap="round" stroke-linejoin="round"/></svg>
<svg class="ic" style="left:550px;top:1705px" width="44" height="46" viewBox="0 0 44 46"><path d="M22 3 L38 9 C38 26 34 36 22 43 C10 36 6 26 6 9 Z" fill="#1b1b1b" stroke="#a9a9a9" stroke-width="3" stroke-linejoin="round"/><path d="M22 3 L22 23 L6 23 C6 18 6 13 6 9 Z" fill="#a9a9a9"/><path d="M22 23 L38 23 C37 32 32 38 22 43 Z" fill="#a9a9a9"/></svg>
<div class="tl" style="left:572px;color:#bdbdbd">Security</div>
<svg class="ic" style="left:742px;top:1708px" width="56" height="42" viewBox="0 0 56 42"><circle cx="38.5" cy="15.5" r="7.6" fill="#a9a9a9"/><path d="M35 39 L35 27 L45 27 C50 27 52.5 30.5 52.5 34 C52.5 37 50.5 39 47.5 39Z" fill="#a9a9a9"/><circle cx="19" cy="12" r="8.2" fill="#a9a9a9" stroke="#1b1b1b" stroke-width="2"/><rect x="3.5" y="23.5" width="31" height="16" rx="8" fill="#a9a9a9" stroke="#1b1b1b" stroke-width="2"/></svg>
<div class="tl" style="left:800px;top:1715px;transform:none;font-size:24px;color:#bdbdbd">32</div>
<div class="tl" style="left:770px;color:#bdbdbd">Participants</div>
<svg class="ic" style="left:852px;top:1722px" width="20" height="16" viewBox="0 0 20 16"><path d="M3.8 11.8 L10 5.6 L16.2 11.8" stroke="#c4c4c4" stroke-width="3" fill="none" stroke-linecap="round" stroke-linejoin="round"/></svg>
<svg class="ic" style="left:952px;top:1707px" width="48" height="44" viewBox="0 0 48 44"><path d="M9 3 L39 3 C43 3 45 5 45 9 L45 26 C45 30 43 32 39 32 L20 32 L10 41 L10 32 L9 32 C5 32 3 30 3 26 L3 9 C3 5 5 3 9 3Z" fill="#a9a9a9"/></svg>
<div class="tl" style="left:975px;color:#bdbdbd">Chat</div>
<svg class="ic" style="left:1031px;top:1722px" width="20" height="16" viewBox="0 0 20 16"><path d="M3.8 11.8 L10 5.6 L16.2 11.8" stroke="#c4c4c4" stroke-width="3" fill="none" stroke-linecap="round" stroke-linejoin="round"/></svg>
<svg class="ic" style="left:1130px;top:1707px" width="56" height="44" viewBox="0 0 56 44"><rect x="4" y="4" width="48" height="36" rx="6" fill="#5fd35f"/><path d="M28 31 L28 13 M20.5 20 L28 12.5 L35.5 20" stroke="#0e0e0e" stroke-width="3.6" fill="none" stroke-linecap="round" stroke-linejoin="round"/></svg>
<div class="tl" style="left:1158px;color:#5ccc5c">Share Screen</div>
<svg class="ic" style="left:1217px;top:1722px" width="20" height="16" viewBox="0 0 20 16"><path d="M3.8 11.8 L10 5.6 L16.2 11.8" stroke="#5fd35f" stroke-width="3" fill="none" stroke-linecap="round" stroke-linejoin="round"/></svg>
<svg class="ic" style="left:1310px;top:1707px" width="44" height="44" viewBox="0 0 44 44"><rect x="4" y="22" width="10" height="18" rx="2" fill="#a9a9a9"/><rect x="17" y="4" width="10" height="36" rx="2" fill="#a9a9a9"/><rect x="30" y="15" width="10" height="25" rx="2" fill="#a9a9a9"/></svg>
<div class="tl" style="left:1332px;color:#bdbdbd">Polls</div>
<svg class="ic" style="left:1503px;top:1705px" width="104" height="48" viewBox="0 0 104 48"><rect x="4" y="4" width="40" height="39.5" rx="5" fill="#a9a9a9"/><rect x="16" y="16" width="4.5" height="16" fill="#1b1b1b"/><rect x="27.5" y="16" width="4.5" height="16" fill="#1b1b1b"/><rect x="60" y="4" width="40" height="39.5" rx="5" fill="#a9a9a9"/><rect x="72" y="16" width="16" height="16" rx="2" fill="#1b1b1b"/></svg>
<div class="tl" style="left:1554px;color:#bdbdbd">Pause/Stop Recording</div>
<svg class="ic" style="left:1784px;top:1705px" width="48" height="48" viewBox="0 0 48 48"><rect x="4" y="4" width="17.5" height="17.5" rx="3.5" fill="#a9a9a9"/><rect x="26.5" y="4" width="17.5" height="17.5" rx="3.5" fill="#a9a9a9"/><rect x="4" y="26" width="17.5" height="17.5" rx="3.5" fill="#a9a9a9"/><rect x="26.5" y="26" width="17.5" height="17.5" rx="3.5" fill="#a9a9a9"/></svg>
<div class="tl" style="left:1807px;color:#bdbdbd">Breakout Rooms</div>
<svg class="ic" style="left:1975px;top:1702px" width="52" height="50" viewBox="0 0 52 50"><circle cx="23" cy="27" r="18" fill="#a9a9a9"/><circle cx="40" cy="13" r="9" fill="#1b1b1b"/><path d="M40 5 L40 19 M33 12 L47 12" stroke="#a9a9a9" stroke-width="3" stroke-linecap="round"/><circle cx="17" cy="24" r="2.3" fill="#1b1b1b"/><circle cx="29" cy="24" r="2.3" fill="#1b1b1b"/><path d="M14 31 C17 36 29 36 32 31" stroke="#1b1b1b" stroke-width="2.8" fill="none" stroke-linecap="round"/></svg>
<div class="tl" style="left:1998px;color:#bdbdbd">Reactions</div>
<svg class="ic" style="left:2044px;top:1722px" width="20" height="16" viewBox="0 0 20 16"><path d="M3.8 11.8 L10 5.6 L16.2 11.8" stroke="#c4c4c4" stroke-width="3" fill="none" stroke-linecap="round" stroke-linejoin="round"/></svg>
<svg class="ic" style="left:2147px;top:1709px" width="42" height="40" viewBox="0 0 42 40"><path d="M5 17 L5 10 C5 6 7 4 11 4 L20 4" stroke="#a9a9a9" stroke-width="3" fill="none" stroke-linecap="round"/><path d="M36 22 L36 30 C36 34 34 36 30 36 L21 36" stroke="#a9a9a9" stroke-width="3" fill="none" stroke-linecap="round"/><circle cx="31" cy="9" r="5" stroke="#a9a9a9" stroke-width="3" fill="none"/><circle cx="10" cy="31" r="5" stroke="#a9a9a9" stroke-width="3" fill="none"/></svg>
<div class="tl" style="left:2168px;color:#bdbdbd">Apps</div>
<svg class="ic" style="left:2222px;top:1722px" width="20" height="16" viewBox="0 0 20 16"><path d="M3.8 11.8 L10 5.6 L16.2 11.8" stroke="#c4c4c4" stroke-width="3" fill="none" stroke-linecap="round" stroke-linejoin="round"/></svg>
<svg class="ic" style="left:2322px;top:1708px" width="48" height="42" viewBox="0 0 48 42"><path d="M14 36 L9 36 C6 36 4.5 34 4.5 31 L4.5 9 C4.5 6 6 4.5 9 4.5 L39 4.5 C42 4.5 43.5 6 43.5 9 L43.5 31" stroke="#a9a9a9" stroke-width="3" fill="none" stroke-linecap="round"/><path d="M20 33 L26 29 L42 29 C43.5 29 44 30 44 31 L44 35 C44 36.5 43.5 37.5 42 37.5 L26 37.5 Z" fill="#a9a9a9"/></svg>
<div class="tl" style="left:2346px;color:#bdbdbd">Whiteboards</div>
<svg class="ic" style="left:2400px;top:1722px" width="20" height="16" viewBox="0 0 20 16"><path d="M3.8 11.8 L10 5.6 L16.2 11.8" stroke="#c4c4c4" stroke-width="3" fill="none" stroke-linecap="round" stroke-linejoin="round"/></svg>
<svg class="ic" style="left:2490px;top:1720px" width="52" height="18" viewBox="0 0 52 18"><circle cx="9" cy="8.7" r="4.2" fill="#a9a9a9"/><circle cx="25.5" cy="8.7" r="4.2" fill="#a9a9a9"/><circle cx="42" cy="8.7" r="4.2" fill="#a9a9a9"/></svg>
<div class="tl" style="left:2516px;color:#bdbdbd">More</div>
<div style="position:absolute;left:2728px;top:1719px;width:128px;height:55px;background:#b33b32;border-radius:15px;color:#fff;font-weight:700;font-size:25.7px;line-height:57px;text-align:center"><span style="display:inline-block;transform:scaleY(1.06)">Leave</span></div>
<svg class="ic" style="left:580px;top:1598px" width="382" height="104" viewBox="0 0 382 104"><path d="M22 9.5 L359.5 9.5 C367 9.5 372 14.5 372 22 L372 75 C372 82.5 367 87.5 359.5 87.5 L207 87.5 L190 98 L173 87.5 L22 87.5 C14.5 87.5 9.5 82.5 9.5 75 L9.5 22 C9.5 14.5 14.5 9.5 22 9.5Z" fill="#232323" stroke="#9c9c9c" stroke-width="3.5" stroke-linejoin="round"/></svg>
<div style="position:absolute;left:617px;top:1628px;font-size:25.6px;line-height:34px;color:#f4f4f4;white-space:nowrap;-webkit-text-stroke:0.3px #f4f4f4">28 participants raised hand</div>
<div style="position:absolute;left:0;top:0;width:2880px;height:1800px;border:2px solid #585858;pointer-events:none"></div>
</body></html>
